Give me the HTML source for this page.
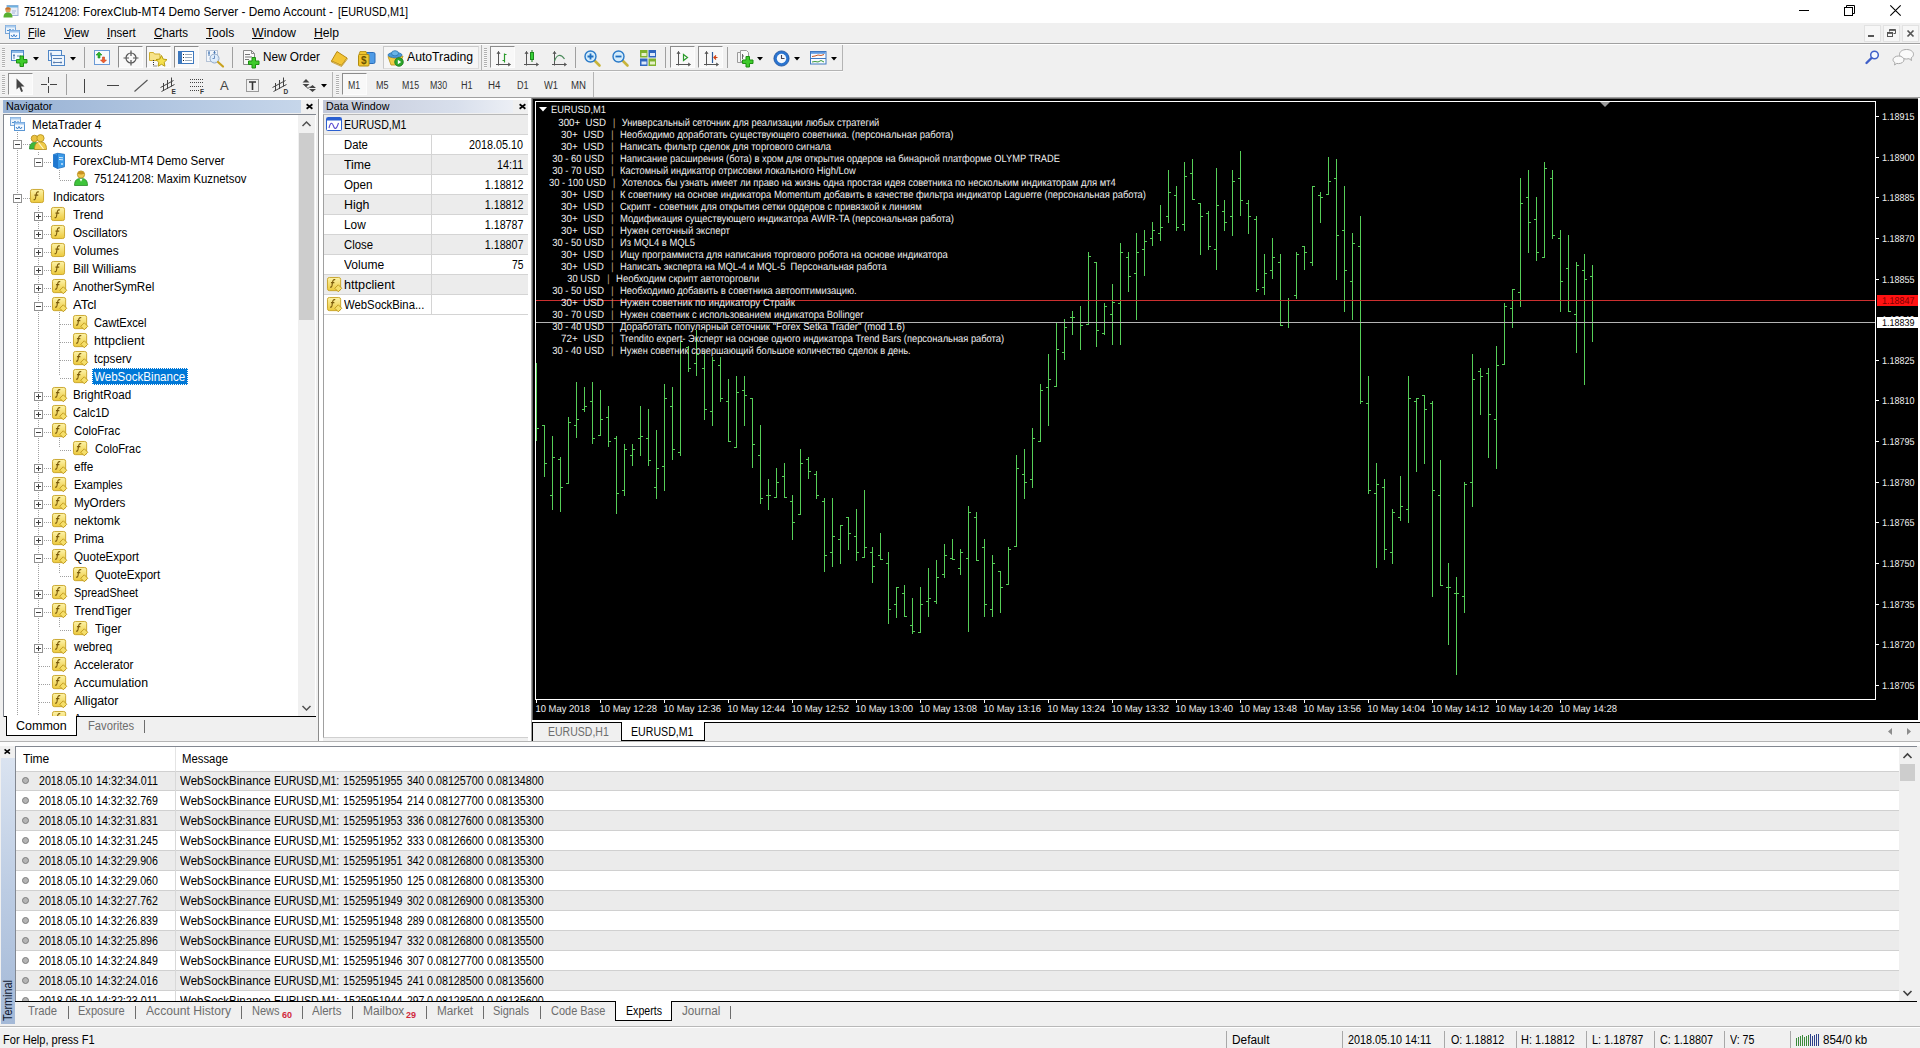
<!DOCTYPE html>
<html lang="en">
<head>
<meta charset="utf-8">
<title>751241208: ForexClub-MT4 Demo Server - Demo Account - [EURUSD,M1]</title>
<style>
*{box-sizing:border-box;margin:0;padding:0}
html,body{width:1920px;height:1048px;overflow:hidden;background:#f0f0f0}
body{font-family:"Liberation Sans",sans-serif;font-size:12px;color:#000;position:relative}
.abs{position:absolute}
.t{position:absolute;white-space:pre;line-height:14px;transform-origin:0 0}
svg{position:absolute;overflow:visible}
#titlebar{position:absolute;left:0;top:0;width:1920px;height:23px;background:#fff}
#menubar{position:absolute;left:0;top:23px;width:1920px;height:20px;background:#f0f0f0}
.mi{position:absolute;top:3px;font-size:12px;line-height:14px;white-space:pre;transform-origin:0 0}
.mi u{text-decoration:underline;text-underline-offset:1px}
.hl{position:absolute;height:1px}
.vl{position:absolute;width:1px}
.grip{position:absolute;width:3px;background:repeating-linear-gradient(to bottom,#b0b0b0 0,#b0b0b0 1px,#f8f8f8 1px,#f8f8f8 2px)}
.tbsep{position:absolute;width:1px;background:#a0a0a0}
.pressed{position:absolute;background:#f8f8f8;border:1px solid;border-color:#8c8c8c #fcfcfc #fcfcfc #8c8c8c}
.tf{position:absolute;font-size:10px;line-height:12px;color:#333;white-space:pre;transform-origin:0 0}
.phead{position:absolute;height:13px}
.pht{position:absolute;font-size:11px;line-height:13px;white-space:pre;transform-origin:0 0}
.tree .t{font-size:12px;line-height:18px;height:18px}
.dotsh{position:absolute;height:1px;background:repeating-linear-gradient(to right,#a0a0a0 0,#a0a0a0 1px,transparent 1px,transparent 2px)}
.dotsv{position:absolute;width:1px;background:repeating-linear-gradient(to bottom,#a0a0a0 0,#a0a0a0 1px,transparent 1px,transparent 2px)}
.pm{position:absolute;width:9px;height:9px;border:1px solid #919191;background:#fff}
.pm:before{content:"";position:absolute;left:1px;top:3px;width:5px;height:1px;background:#404040}
.pm.plus:after{content:"";position:absolute;left:3px;top:1px;width:1px;height:5px;background:#404040}
.tab{position:absolute;font-size:12px;line-height:14px;white-space:pre;color:#6d6d6d;transform-origin:0 0}
.dw{position:absolute;font-size:12px;line-height:14px;white-space:pre;transform-origin:0 0}
.dwr{transform-origin:100% 0}
.ct{font-family:"Liberation Sans",sans-serif;font-size:10.5px;fill:#f0f0f0;white-space:pre}
.ax{font-size:10px}
.lr{position:absolute;left:16px;width:1883px;height:20px;border-bottom:1px solid #d4d4d4}
.lr .t{top:3px;font-size:12px}
.sb{position:absolute;top:1033px;font-size:12px;line-height:14px;white-space:pre;transform-origin:0 0}
</style>
</head>
<body>
<!-- TITLE BAR -->
<div id="titlebar">
  <svg style="left:3px;top:5px" width="16" height="13" viewBox="0 0 16 13">
    <rect x="4" y="0.5" width="11" height="10" fill="#e8eef8" stroke="#9db3d6"/>
    <rect x="4" y="0.5" width="11" height="2" fill="#6fb1e0"/>
    <path d="M9 6h4M9 8h3" stroke="#a9b7d9" stroke-width="1"/>
    <circle cx="5" cy="5" r="2.6" fill="#e0a060"/>
    <path d="M2.2 4.6a2.8 2.4 0 0 1 5.6 0z" fill="#c8702a"/>
    <path d="M0.5 12.5c0-4 2-5 4.5-5s4.5 1 4.500 5z" fill="#58b030"/>
  </svg>
  <div class="t" style="left:23.75px;top:5px;font-size:12px;line-height:14px;transform:scaleX(0.8793)">751241208:</div>
  <div class="t" style="left:83.25px;top:5px;font-size:12px;line-height:14px;transform:scaleX(0.9866)">ForexClub-MT4 Demo Server - Demo Account -</div>
  <div class="t" style="left:337.5px;top:5px;font-size:12px;line-height:14px;transform:scaleX(0.9050)">[EURUSD,M1]</div>
  <!-- window controls -->
  <div class="abs" style="left:1799px;top:10px;width:10px;height:1px;background:#000"></div>
  <svg style="left:1844px;top:5px" width="11" height="11" viewBox="0 0 11 11" fill="none" stroke="#000" stroke-width="1">
    <rect x="0.500" y="2.500" width="8" height="8"/><path d="M2.500 2.500v-2h8v8h-2"/>
  </svg>
  <svg style="left:1890px;top:5px" width="11" height="11" viewBox="0 0 11 11" fill="none" stroke="#000" stroke-width="1.100">
    <path d="M0.300 0.300l10.400 10.400M10.700 0.300l-10.400 10.400"/>
  </svg>
</div>

<!-- MENU BAR -->
<div id="menubar">
  <svg style="left:5px;top:2px" width="15" height="14" viewBox="0 0 15 14">
    <rect x="0.500" y="0.500" width="10" height="8" fill="#eaf2fb" stroke="#7aa7d8"/>
    <rect x="0.500" y="0.500" width="10" height="2" fill="#a9cbee"/>
    <path d="M2 5.500h2l1-1.500 1 2 1-1h2" stroke="#4d8fd0" fill="none" stroke-width="1"/>
    <rect x="4.500" y="5.500" width="10" height="8" fill="#f4f9ff" stroke="#5b97d4"/>
    <rect x="4.500" y="5.500" width="10" height="2" fill="#9cc4ee"/>
    <path d="M6 10l1.500 2 1.500-2.500 1.500 2.500 1.500-2" stroke="#3b7fc8" fill="none" stroke-width="1"/>
  </svg>
  <div class="mi" id="m1" style="left:28.3px;transform:scaleX(0.8988)"><u>F</u>ile</div>
  <div class="mi" id="m2" style="left:64px;transform:scaleX(0.9685)"><u>V</u>iew</div>
  <div class="mi" id="m3" style="left:107.3px;transform:scaleX(0.9557)"><u>I</u>nsert</div>
  <div class="mi" id="m4" style="left:154.3px;transform:scaleX(0.9616)"><u>C</u>harts</div>
  <div class="mi" id="m5" style="left:206px;transform:scaleX(1.0102)"><u>T</u>ools</div>
  <div class="mi" id="m6" style="left:252px;transform:scaleX(1.0307)"><u>W</u>indow</div>
  <div class="mi" id="m7" style="left:314px;transform:scaleX(1.0127)"><u>H</u>elp</div>
  <!-- MDI child controls -->
  <div class="abs" style="left:1864px;top:2px;width:17px;height:17px;background:#f7f7f7;border:1px solid #e2e2e2"></div>
  <div class="abs" style="left:1883px;top:2px;width:17px;height:17px;background:#f7f7f7;border:1px solid #e2e2e2"></div>
  <div class="abs" style="left:1902px;top:2px;width:17px;height:17px;background:#f7f7f7;border:1px solid #e2e2e2"></div>
  <div class="abs" style="left:1868px;top:12px;width:6px;height:2px;background:#555"></div>
  <svg style="left:1887px;top:6px" width="9" height="8" viewBox="0 0 9 8" fill="none" stroke="#555">
    <path d="M2.500 2.500v-2h6v4h-2" /><path d="M2.500 1.200h6" stroke-width="1.400"/>
    <rect x="0.500" y="3.500" width="5" height="4"/><path d="M0.500 4.200h5" stroke-width="1.400"/>
  </svg>
  <svg style="left:1907px;top:7px" width="7" height="7" viewBox="0 0 7 7" fill="none" stroke="#555" stroke-width="1.700">
    <path d="M0.500 0.500l6 6M6.500 0.500l-6 6"/>
  </svg>
</div>
<div class="hl" style="left:0;top:43px;width:1920px;background:#a0a0a0"></div>
<div class="hl" style="left:0;top:44px;width:1920px;background:#ffffff"></div>
<!-- TOOLBAR 1 -->
<div class="hl" style="left:0;top:70px;width:843px;background:#b4b4b4"></div>
<div class="hl" style="left:0;top:71px;width:843px;background:#fafafa"></div>
<div class="vl" style="left:842px;top:45px;height:26px;background:#b4b4b4"></div>
<div class="grip" style="left:2px;top:48px;height:20px"></div>
<!-- new chart -->
<svg style="left:11px;top:50px" width="18" height="18" viewBox="0 0 18 18">
  <rect x="0.500" y="0.500" width="12" height="10" fill="#f4f9ff" stroke="#4f86c6"/>
  <rect x="1" y="1" width="11" height="2" fill="#8fbbe8"/>
  <path d="M3 4v5M2 5.500h2M6 6h4" stroke="#5a7fb0" fill="none"/>
  <path d="M9 6h3.500v3.500H16v3.500h-3.500v3.500H9v-3.500H5.500V9.500H9z" fill="#3ecb2a" stroke="#1d8f12" stroke-width="1"/>
</svg>
<svg style="left:33px;top:57px" width="6" height="4"><path d="M0 0h6l-3 3.500z" fill="#000"/></svg>
<!-- profiles -->
<svg style="left:48px;top:50px" width="18" height="18" viewBox="0 0 18 18">
  <rect x="0.500" y="0.500" width="13" height="10" fill="#eef5fd" stroke="#4f86c6"/>
  <path d="M3 2.500v4M2 4h2M4 6h7M10 5v2" stroke="#5a7fb0" fill="none"/>
  <rect x="3.500" y="5.500" width="13" height="10" fill="#eef5fd" stroke="#4f86c6"/>
  <path d="M5 8.500h9M5 12.500h9M6 11.500v2M13 11.500v2" stroke="#5a7fb0" fill="none"/>
</svg>
<svg style="left:70px;top:57px" width="6" height="4"><path d="M0 0h6l-3 3.500z" fill="#000"/></svg>
<div class="tbsep" style="left:84px;top:47px;height:21px"></div>
<!-- market watch -->
<svg style="left:94px;top:50px" width="17" height="17" viewBox="0 0 17 17">
  <rect x="0.500" y="0.500" width="15" height="14" fill="#f6f9fd" stroke="#6a9ad6"/>
  <path d="M5 2l3 3h-2v3h-2v-3h-2z" fill="#2eb82e" stroke="#1c8c1c" stroke-width="0.600"/>
  <path d="M9.500 13l-3-3h2v-3h2v3h2z" fill="#f06030" stroke="#c8401a" stroke-width="0.600"/>
</svg>
<!-- crosshair (pressed) -->
<div class="pressed" style="left:118px;top:46px;width:25px;height:22px"></div>
<svg style="left:123px;top:50px" width="16" height="16" viewBox="0 0 16 16" fill="none" stroke="#555" stroke-width="1.200">
  <circle cx="8" cy="8" r="5"/><path d="M8 0.500v5.500M8 10v5.500M0.500 8h5.500M10 8h5.500"/>
</svg>
<!-- navigator folder star (pressed) -->
<div class="pressed" style="left:146px;top:46px;width:25px;height:22px"></div>
<svg style="left:149px;top:50px" width="19" height="18" viewBox="0 0 19 18">
  <path d="M0.500 2.500h4l1 1.500h5.500v6.500H0.500z" fill="#f7e38a" stroke="#cfae2e"/>
  <path d="M4.500 10v6h3" stroke="#333" stroke-dasharray="1 1" fill="none"/>
  <path d="M12.500 5.500l1.700 3.600 3.800 0.500-2.800 2.700 0.700 3.900-3.400-1.900-3.400 1.900 0.700-3.900-2.800-2.700 3.800-0.500z" fill="#f5e14e" stroke="#b89c12" stroke-width="1"/>
</svg>
<!-- terminal/list (pressed) -->
<div class="pressed" style="left:174px;top:46px;width:25px;height:22px"></div>
<svg style="left:178px;top:51px" width="17" height="14" viewBox="0 0 17 14">
  <rect x="0.500" y="0.500" width="15" height="12" fill="#fff" stroke="#3d78be"/>
  <rect x="1" y="1" width="3" height="11" fill="#3d78be"/>
  <path d="M5 3.500h1M5 6.500h1M5 9.500h1" stroke="#222"/><path d="M7 3.500h7M7 6.500h7M7 9.500h7" stroke="#9ab"/>
</svg>
<!-- strategy tester magnifier -->
<svg style="left:206px;top:50px" width="19" height="18" viewBox="0 0 19 18">
  <rect x="0.500" y="0.500" width="11" height="11" fill="#f2f6fb" stroke="#b5c3d6"/>
  <path d="M3 1v5M2 3h2M8.500 1v4M7.500 2.500h2" stroke="#4a7ab5" fill="none"/>
  <circle cx="8.500" cy="8.500" r="4.500" fill="#dcebfa" fill-opacity="0.850" stroke="#8fa9c9"/>
  <path d="M8.500 5.500v3h-2" stroke="#6a8fc0" fill="none"/>
  <path d="M12 12l5 4.500" stroke="#c9a21e" stroke-width="2.200" stroke-linecap="round"/>
</svg>
<div class="tbsep" style="left:232px;top:47px;height:21px"></div>
<!-- new order -->
<svg style="left:243px;top:50px" width="17" height="19" viewBox="0 0 17 19">
  <path d="M0.500 0.500h8l3 3v11h-11z" fill="#fafafa" stroke="#8a8a8a"/>
  <path d="M8.500 0.500v3h3" fill="none" stroke="#8a8a8a"/>
  <path d="M2 4.500h5M2 7h7M2 9.500h4" stroke="#777"/>
  <path d="M9 7.500h3.500V11H16v3.500h-3.500V18H9v-3.500H5.500V11H9z" fill="#3ecb2a" stroke="#1d8f12"/>
</svg>
<div class="t" id="neword" style="left:262.5px;top:50px;font-size:12px;transform:scaleX(0.9825)">New Order</div>
<!-- book -->
<svg style="left:331px;top:51px" width="17" height="16" viewBox="0 0 17 16">
  <path d="M6 0.500l10 6.500-5.500 7.500-10-4.500z" fill="#f2c436" stroke="#b98a10"/>
  <path d="M0.500 10l10 4.500 5.500-7.500v1.500l-5.500 7-10-4.500z" fill="#fff3c0" stroke="#b98a10" stroke-width="0.700"/>
</svg>
<!-- dollar -->
<svg style="left:358px;top:50px" width="18" height="17" viewBox="0 0 18 17">
  <rect x="6.500" y="2.500" width="10.500" height="11" rx="1.500" fill="#4f9be6" stroke="#2a6cb8"/>
  <rect x="0.500" y="4.500" width="10.500" height="11.500" rx="1" fill="#f0c52e" stroke="#b18c10"/>
  <path d="M2 1.500h6l1 3h-8z" fill="#f0c52e" stroke="#b18c10" stroke-width="0.800"/>
  <text x="5.800" y="14" font-size="10" font-weight="bold" text-anchor="middle" fill="#6a5200" font-family="Liberation Sans, sans-serif">$</text>
</svg>
<!-- autotrading -->
<div class="abs" style="left:383px;top:46px;width:96px;height:23px;background:#f6f6f6;border:1px solid #dcdcdc;border-top-color:#c8c8c8;border-left-color:#c8c8c8"></div>
<svg style="left:387px;top:50px" width="17" height="17" viewBox="0 0 17 17">
  <path d="M1 6.500l7 2 8-2.500-3 9h-9z" fill="#f0cb45" stroke="#b8921a" stroke-width="0.800"/>
  <ellipse cx="8" cy="5" rx="7" ry="2.600" fill="#4a9ad8" stroke="#2a72b0" stroke-width="0.800"/>
  <ellipse cx="8" cy="3.300" rx="3.500" ry="2.600" fill="#6ab4e8" stroke="#2a72b0" stroke-width="0.800"/>
  <circle cx="12" cy="12" r="4.300" fill="#2ba52b" stroke="#1a7a1a" stroke-width="0.800"/>
  <path d="M10.800 9.800l3.400 2.200-3.400 2.200z" fill="#fff"/>
</svg>
<div class="t" id="autot" style="left:407.3px;top:50px;font-size:12px;transform:scaleX(1.0164)">AutoTrading</div>
<div class="tbsep" style="left:481px;top:45px;height:25px;background:#b4b4b4"></div>
<div class="grip" style="left:484px;top:48px;height:20px"></div>
<!-- bar chart (pressed) -->
<div class="pressed" style="left:490px;top:46px;width:25px;height:22px"></div>
<svg style="left:496px;top:51px" width="15" height="16" viewBox="0 0 15 16" fill="none">
  <path d="M2.500 0.500v14M0 13.500h14M1 3l1.500-2.500 1.500 2.500M12 12l2.500 1.500-2.500 1.500" stroke="#555"/>
  <path d="M8.500 2.500v9M8.500 3.500h2M6.500 9.500h2" stroke="#2a9a2a" stroke-width="1.200"/>
</svg>
<!-- candles -->
<svg style="left:524px;top:50px" width="15" height="17" viewBox="0 0 15 17" fill="none">
  <path d="M2.500 1.500v14M0 14.500h14M1 4l1.500-2.500 1.500 2.500M12 13l2.500 1.500-2.500 1.500" stroke="#555"/>
  <path d="M8 0v12" stroke="#1c7a1c"/><rect x="6.500" y="2.500" width="3" height="7" fill="#36d036" stroke="#1c8a1c"/>
</svg>
<!-- line chart -->
<svg style="left:552px;top:51px" width="15" height="16" viewBox="0 0 15 16" fill="none">
  <path d="M2.500 0.500v14M0 13.500h14M1 3l1.500-2.500 1.500 2.500M12 12l2.500 1.500-2.500 1.500" stroke="#555"/>
  <path d="M2.500 10c2-6 6-8 10-2" stroke="#4a8a5a" stroke-width="1.200"/>
</svg>
<div class="tbsep" style="left:575px;top:47px;height:21px"></div>
<!-- zoom in -->
<svg style="left:584px;top:50px" width="17" height="17" viewBox="0 0 17 17">
  <path d="M10 10l5.500 5.500" stroke="#c8b43a" stroke-width="2.600" stroke-linecap="round"/>
  <circle cx="6.500" cy="6.500" r="5.500" fill="#d4ecfb" stroke="#2a7ac8" stroke-width="1.400"/>
  <path d="M3.500 6.500h6M6.500 3.500v6" stroke="#1f6fc0" stroke-width="1.800"/>
</svg>
<!-- zoom out -->
<svg style="left:612px;top:50px" width="17" height="17" viewBox="0 0 17 17">
  <path d="M10 10l5.500 5.500" stroke="#c8b43a" stroke-width="2.600" stroke-linecap="round"/>
  <circle cx="6.500" cy="6.500" r="5.500" fill="#d4ecfb" stroke="#2a7ac8" stroke-width="1.400"/>
  <path d="M3.500 6.500h6" stroke="#1f6fc0" stroke-width="1.800"/>
</svg>
<!-- tile -->
<svg style="left:640px;top:50px" width="16" height="16" viewBox="0 0 16 16">
  <rect x="0" y="0" width="7.500" height="7.500" fill="#7fb22e"/><rect x="8.500" y="0" width="7.500" height="7.500" fill="#2f66c0"/>
  <rect x="0" y="8.500" width="7.500" height="7.500" fill="#2f66c0"/><rect x="8.500" y="8.500" width="7.500" height="7.500" fill="#7fb22e"/>
  <rect x="1.500" y="3" width="5" height="3" fill="#e6f0c8"/><rect x="10" y="3" width="5" height="3" fill="#dce8fa"/>
  <rect x="1.500" y="11.500" width="5" height="3" fill="#dce8fa"/><rect x="10" y="11.500" width="5" height="3" fill="#e6f0c8"/>
</svg>
<div class="tbsep" style="left:665px;top:47px;height:21px"></div>
<!-- autoscroll (pressed) -->
<div class="pressed" style="left:670px;top:46px;width:25px;height:22px"></div>
<svg style="left:676px;top:51px" width="15" height="16" viewBox="0 0 15 16" fill="none">
  <path d="M2.500 0.500v14M0 13.500h14M1 3l1.500-2.500 1.500 2.500M12 12l2.500 1.500-2.500 1.500" stroke="#555"/>
  <path d="M7.500 3.500l4 3-4 3z" stroke="#2a9a2a" stroke-width="1.200"/>
</svg>
<!-- chart shift (pressed) -->
<div class="pressed" style="left:698px;top:46px;width:25px;height:22px"></div>
<svg style="left:704px;top:51px" width="15" height="16" viewBox="0 0 15 16" fill="none">
  <path d="M2.500 0.500v14M0 13.500h14M1 3l1.500-2.500 1.500 2.500M12 12l2.500 1.500-2.500 1.500" stroke="#555"/>
  <path d="M8.500 1v11" stroke="#2a5a9a" stroke-width="1.200"/><path d="M13.500 6.500h-4M12 4.500l-2 2 2 2" stroke="#d04010" stroke-width="1.200"/>
</svg>
<div class="tbsep" style="left:727px;top:47px;height:21px"></div>
<!-- indicators -->
<svg style="left:737px;top:50px" width="17" height="18" viewBox="0 0 17 18">
  <path d="M0.500 2.500h6l2 2v8h-8z" fill="#f4f4f4" stroke="#9a9a9a"/>
  <path d="M3.500 0.500h6l2 2v9h-8z" fill="#fafafa" stroke="#9a9a9a"/>
  <path d="M5.500 4v5M5.500 6h1.500" stroke="#666" fill="none"/>
  <path d="M9 6.500h3.500V10H16v3.500h-3.500V17H9v-3.500H5.500V10H9z" fill="#3ecb2a" stroke="#1d8f12"/>
</svg>
<svg style="left:757px;top:57px" width="6" height="4"><path d="M0 0h6l-3 3.500z" fill="#000"/></svg>
<!-- clock -->
<svg style="left:773px;top:50px" width="17" height="17" viewBox="0 0 17 17">
  <circle cx="8.500" cy="8.500" r="7.600" fill="#2a74d0" stroke="#1a4f9a" stroke-width="0.800"/>
  <circle cx="8.500" cy="8.500" r="4.700" fill="#f4f8fc"/>
  <path d="M8.500 5v3.500h3" stroke="#445" fill="none" stroke-width="1.100"/>
</svg>
<svg style="left:794px;top:57px" width="6" height="4"><path d="M0 0h6l-3 3.500z" fill="#000"/></svg>
<!-- templates -->
<svg style="left:810px;top:51px" width="17" height="14" viewBox="0 0 17 14">
  <rect x="0.500" y="0.500" width="15.500" height="12.500" fill="#f8fbff" stroke="#3f78c0"/>
  <rect x="1" y="1" width="14.500" height="1.800" fill="#5f9ae0"/>
  <path d="M0.500 7.500h15.500" stroke="#3f78c0"/>
  <path d="M2 5.500l3-0.500 3 -1 3 0.500 3-1" stroke="#c85a28" fill="none"/>
  <path d="M2 11l3-0.500 3 0.500 3-1.500 3 1.500" stroke="#3a9a3a" fill="none"/>
</svg>
<svg style="left:831px;top:57px" width="6" height="4"><path d="M0 0h6l-3 3.500z" fill="#000"/></svg>
<!-- right: search + chat -->
<svg style="left:1865px;top:50px" width="15" height="15" viewBox="0 0 15 15" fill="none">
  <circle cx="9.500" cy="5" r="3.800" stroke="#3f5fc8" stroke-width="1.500" fill="#f4f8ff"/>
  <path d="M6.500 8l-5 5" stroke="#3f5fc8" stroke-width="2.400" stroke-linecap="round"/>
</svg>
<svg style="left:1892px;top:49px" width="23" height="17" viewBox="0 0 23 17" fill="#fafafa" stroke="#a8a8a8">
  <path d="M14.500 0.500c4 0 7 2 7 4.800 0 1.500-1 2.800-2.400 3.700l0.400 2.500-2.500-1.800c-0.800 0.200-1.600 0.300-2.500 0.300-4 0-7-2-7-4.700s3-4.800 7-4.800z"/>
  <path d="M6.500 7c3 0 5.500 1.700 5.500 3.800s-2.500 3.800-5.500 3.800c-0.600 0-1.200-0.100-1.700-0.200l-2.300 1.600 0.500-2.300c-1.200-0.700-2-1.800-2-2.900 0-2.100 2.500-3.800 5.500-3.800z"/>
</svg>

<!-- TOOLBAR 2 -->
<div class="hl" style="left:0;top:97px;width:1920px;background:#a0a0a0"></div>
<div class="vl" style="left:593px;top:72px;height:25px;background:#b4b4b4"></div>
<div class="grip" style="left:2px;top:75px;height:20px"></div>
<div class="pressed" style="left:8px;top:73px;width:25px;height:22px"></div>
<svg style="left:16px;top:78px" width="9" height="15" viewBox="0 0 9 15"><path d="M0.500 0.500v11l2.700-2.500 2 5 1.800-0.800-2-4.700h3.500z" fill="#444"/></svg>
<svg style="left:41px;top:77px" width="16" height="16" viewBox="0 0 16 16" stroke="#444" fill="none"><path d="M7.500 0v6M7.500 9v7M0 7.500h6M9 7.500h7"/></svg>
<div class="tbsep" style="left:66px;top:74px;height:21px"></div>
<div class="vl" style="left:84px;top:79px;height:14px;background:#444"></div>
<div class="hl" style="left:107px;top:85px;width:12px;background:#444"></div>
<svg style="left:134px;top:79px" width="14" height="14" viewBox="0 0 14 14"><path d="M0.500 12.500l13-11.500" stroke="#555" stroke-width="1.100"/></svg>
<svg style="left:160px;top:77px" width="17" height="17" viewBox="0 0 17 17" fill="none" stroke="#444">
  <path d="M0.500 10.500l13-7M1.500 14.500l13-7M3.500 6v8M7.500 3v9M11.500 0.500v9" stroke-width="1"/>
  <text x="11.500" y="16.500" font-size="6.500" font-weight="bold" fill="#333" stroke="none" font-family="Liberation Sans, sans-serif">E</text>
</svg>
<svg style="left:190px;top:79px" width="16" height="16" viewBox="0 0 16 16" fill="none" stroke="#444">
  <path d="M0 0.500h13M0 3.500h13M0 7.500h13M0 11.500h9" stroke-dasharray="1 1"/>
  <text x="10" y="15" font-size="6.500" font-weight="bold" fill="#333" stroke="none" font-family="Liberation Sans, sans-serif">F</text>
</svg>
<div class="t" style="left:220px;top:78px;font-size:13px;line-height:15px;color:#444">A</div>
<svg style="left:246px;top:78px" width="14" height="15" viewBox="0 0 14 15" fill="none">
  <rect x="0.500" y="1.500" width="12" height="12" stroke="#444" stroke-dasharray="1 1"/>
  <path d="M3 4h7M6.500 4v8" stroke="#333" stroke-width="1.600"/>
</svg>
<svg style="left:272px;top:77px" width="17" height="17" viewBox="0 0 17 17" fill="none" stroke="#444">
  <path d="M0.500 10.500l13-7M1.500 14.500l13-7M3.500 6v8M7.500 3v9M11.500 0.500v9" stroke-width="1"/>
  <text x="11.500" y="16.500" font-size="6.500" font-weight="bold" fill="#333" stroke="none" font-family="Liberation Sans, sans-serif">D</text>
</svg>
<svg style="left:302px;top:79px" width="15" height="13" viewBox="0 0 15 13" fill="#444">
  <path d="M4 0l3.500 3.500h-7zM0.500 5h7l-3.500 3z"/><path d="M3 6.500l3 3 2-2" stroke="#444" fill="none"/>
  <path d="M10.500 6l3.500 3h-7zM7 10h7l-3.500 3z"/>
</svg>
<svg style="left:321px;top:84px" width="6" height="4"><path d="M0 0h6l-3 3.500z" fill="#000"/></svg>
<div class="vl" style="left:332px;top:72px;height:25px;background:#b4b4b4"></div>
<div class="grip" style="left:336px;top:75px;height:20px"></div>
<div class="pressed" style="left:342px;top:73px;width:25px;height:22px"></div>
<div class="tf" style="left:347.5px;top:80px;transform:scaleX(0.8773)">M1</div>
<div class="tf" style="left:375.6px;top:80px;transform:scaleX(0.8989)">M5</div>
<div class="tf" style="left:401.9px;top:80px;transform:scaleX(0.8790)">M15</div>
<div class="tf" style="left:429.75px;top:80px;transform:scaleX(0.8790)">M30</div>
<div class="tf" style="left:460.6px;top:80px;transform:scaleX(0.9065)">H1</div>
<div class="tf" style="left:487.5px;top:80px;transform:scaleX(0.9768)">H4</div>
<div class="tf" style="left:516.5px;top:80px;transform:scaleX(0.9065)">D1</div>
<div class="tf" style="left:544.1px;top:80px;transform:scaleX(0.9333)">W1</div>
<div class="tf" style="left:570.6px;top:80px;transform:scaleX(0.9639)">MN</div>
<svg width="0" height="0" style="left:-10px;top:-10px"><defs>
<linearGradient id="gF" x1="0" y1="0" x2="0" y2="1"><stop offset="0" stop-color="#fdf3a8"/><stop offset="1" stop-color="#ecc93c"/></linearGradient>
<g id="icoF"><rect x="0.500" y="0.500" width="14" height="14" rx="2" fill="url(#gF)" stroke="#c9a42a"/>
<path d="M9.500 3.300c-2-0.800-2.600 0.600-2.900 2.600l-0.700 4c-0.300 1.500-1 1.800-2 1.400M4.800 6.600h4" fill="none" stroke="#7a5a0a" stroke-width="1.200"/></g>
<g id="icoFD"><rect x="0.500" y="0.500" width="14" height="14" rx="2" fill="url(#gF)" stroke="#c9a42a"/>
<path d="M8.800 3c-2-0.800-2.600 0.600-2.900 2.600l-0.600 3.600c-0.300 1.500-1 1.800-2 1.400M4.200 6h3.600" fill="none" stroke="#7a5a0a" stroke-width="1.200"/>
<path d="M12 8.300l3.700 3.700-3.700 3.700-3.700-3.700z" fill="#f6df6a" stroke="#b8921a" stroke-width="0.900"/></g>
</defs></svg>
<!-- NAVIGATOR -->
<div class="abs" style="left:0;top:98px;width:531px;height:2px;background:#fff"></div>
<div class="phead" style="left:3px;top:100px;width:298px;background:linear-gradient(to right,#98b2d4,#b4c8e2 60%,#c6d6ea)"></div>
<div class="pht" style="left:5.6px;top:100px;transform:scaleX(0.9856)">Navigator</div>
<div class="abs" style="left:301px;top:100px;width:15px;height:13px;background:#f0f0f0"></div>
<svg style="left:305.5px;top:104px" width="7" height="5" viewBox="0 0 7 5"><path d="M0.600 0.300l5.800 4.400M6.400 0.300l-5.800 4.400" stroke="#000" stroke-width="1.700"/></svg>
<div class="abs tree" style="left:3px;top:114px;width:313px;height:603px;background:#fff;border:1px solid #828790;border-bottom:none;border-right:none;overflow:hidden">
<div class="dotsv" style="left:13px;top:17px;height:588px"></div>
<div class="dotsv" style="left:34px;top:37px;height:4px"></div>
<div class="dotsv" style="left:55px;top:55px;height:9px"></div>
<div class="dotsv" style="left:34px;top:91px;height:514px"></div>
<svg style="left:6px;top:2px" width="15" height="14" viewBox="0 0 15 14">
    <rect x="0.500" y="0.500" width="10" height="8" fill="#eaf2fb" stroke="#7aa7d8"/><rect x="0.500" y="0.500" width="10" height="2" fill="#a9cbee"/>
    <path d="M2 5.500h2l1-1.500 1 2 1-1h2" stroke="#4d8fd0" fill="none"/>
    <rect x="4.500" y="5.500" width="10" height="8" fill="#f4f9ff" stroke="#5b97d4"/><rect x="4.500" y="5.500" width="10" height="2" fill="#9cc4ee"/>
    <path d="M6 10l1.500 2 1.500-2.500 1.500 2.500 1.500-2" stroke="#3b7fc8" fill="none"/></svg>
<div class="t nt" style="left:27.8px;top:1px;transform:scaleX(0.9680)">MetaTrader 4</div>
<div class="dotsh" style="left:19px;top:29px;width:7px"></div>
<div class="pm" style="left:9px;top:25px"></div>
<svg style="left:25px;top:19px" width="18" height="16" viewBox="0 0 18 16">
    <circle cx="5.500" cy="4.500" r="3.300" fill="#eac040" stroke="#b08a18" stroke-width="0.800"/>
    <path d="M0.500 15c0-5 2-6.500 5-6.500s5 1.500 5 6.500z" fill="#3eb83a" stroke="#2a8a28" stroke-width="0.800"/>
    <circle cx="11.500" cy="4.200" r="3.600" fill="#f0cc4a" stroke="#b08a18" stroke-width="0.800"/>
    <path d="M5.500 15.500c0-6 2.500-7.500 6-7.500s6 1.500 6 7.500z" fill="#f0cc4a" stroke="#b08a18" stroke-width="0.800"/>
    <path d="M9.500 8.500l5 6.500" stroke="#fff8d0" stroke-width="1.200"/></svg>
<div class="t nt" style="left:48.5px;top:19px;transform:scaleX(1.0028)">Accounts</div>
<div class="dotsh" style="left:40px;top:47px;width:7px"></div>
<div class="pm" style="left:30px;top:43px"></div>
<svg style="left:49px;top:38px" width="12" height="16" viewBox="0 0 12 16">
    <path d="M0.500 1.500l4-1.200 7 1v12.500l-7 1.700-4-2z" fill="#3a9ae8" stroke="#1f6fc0" stroke-width="0.800"/>
    <path d="M4.500 0.500v15" stroke="#1f6fc0" stroke-width="0.800"/>
    <path d="M0.500 1.500l4 1v13l-4-2z" fill="#1f78d0"/>
    <path d="M6 4.500l4 0.300M6 6.500l4 0.300" stroke="#d8ecff" stroke-width="1"/><circle cx="9" cy="11" r="0.900" fill="#d8ecff"/></svg>
<div class="t nt" style="left:69.3px;top:37px;transform:scaleX(0.9639)">ForexClub-MT4 Demo Server</div>
<div class="dotsh" style="left:56px;top:65px;width:12px"></div>
<svg style="left:70px;top:55px" width="14" height="16" viewBox="0 0 14 16">
    <circle cx="7" cy="4.500" r="3.600" fill="#f0c850" stroke="#b08a18" stroke-width="0.800"/>
    <path d="M3.600 3.800a3.500 3.200 0 0 1 6.800 0c-2 0.800-4.800 0.800-6.800 0z" fill="#c89020"/>
    <path d="M0.500 15.500c0-5.500 2.500-7 6.500-7s6.500 1.500 6.500 7z" fill="#3ec43a" stroke="#2a8a28" stroke-width="0.800"/>
    <path d="M5.500 8.800l1.500 3 1.500-3z" fill="#fff"/></svg>
<div class="t nt" style="left:90.3px;top:55px;transform:scaleX(0.9440)">751241208: Maxim Kuznetsov</div>
<div class="dotsh" style="left:19px;top:83px;width:7px"></div>
<div class="pm" style="left:9px;top:79px"></div>
<svg style="left:26px;top:74px" width="14" height="14" viewBox="0 0 15 15"><rect x="0.500" y="0.500" width="14" height="14" rx="2" fill="url(#gF)" stroke="#c9a42a"/><path d="M9.500 3.300c-2-0.800-2.600 0.600-2.900 2.600l-0.700 4c-0.300 1.500-1 1.800-2 1.400M4.800 6.600h4" fill="none" stroke="#7a5a0a" stroke-width="1.200"/></svg>
<div class="t nt" style="left:48.5px;top:73px;transform:scaleX(0.9879)">Indicators</div>
<div class="dotsh" style="left:40px;top:101px;width:7px"></div>
<div class="pm plus" style="left:30px;top:97px"></div>
<svg style="left:47px;top:92px" width="14" height="14" viewBox="0 0 15 15"><rect x="0.500" y="0.500" width="14" height="14" rx="2" fill="url(#gF)" stroke="#c9a42a"/><path d="M9.500 3.300c-2-0.800-2.600 0.600-2.900 2.600l-0.700 4c-0.300 1.500-1 1.800-2 1.400M4.800 6.600h4" fill="none" stroke="#7a5a0a" stroke-width="1.200"/></svg>
<div class="t nt" style="left:69.3px;top:91px;transform:scaleX(0.9804)">Trend</div>
<div class="dotsh" style="left:40px;top:119px;width:7px"></div>
<div class="pm plus" style="left:30px;top:115px"></div>
<svg style="left:47px;top:110px" width="14" height="14" viewBox="0 0 15 15"><rect x="0.500" y="0.500" width="14" height="14" rx="2" fill="url(#gF)" stroke="#c9a42a"/><path d="M9.500 3.300c-2-0.800-2.600 0.600-2.900 2.600l-0.700 4c-0.300 1.500-1 1.800-2 1.400M4.800 6.600h4" fill="none" stroke="#7a5a0a" stroke-width="1.200"/></svg>
<div class="t nt" style="left:69.3px;top:109px;transform:scaleX(0.9712)">Oscillators</div>
<div class="dotsh" style="left:40px;top:137px;width:7px"></div>
<div class="pm plus" style="left:30px;top:133px"></div>
<svg style="left:47px;top:128px" width="14" height="14" viewBox="0 0 15 15"><rect x="0.500" y="0.500" width="14" height="14" rx="2" fill="url(#gF)" stroke="#c9a42a"/><path d="M9.500 3.300c-2-0.800-2.600 0.600-2.900 2.600l-0.700 4c-0.300 1.500-1 1.800-2 1.400M4.800 6.600h4" fill="none" stroke="#7a5a0a" stroke-width="1.200"/></svg>
<div class="t nt" style="left:69.3px;top:127px;transform:scaleX(0.9928)">Volumes</div>
<div class="dotsh" style="left:40px;top:155px;width:7px"></div>
<div class="pm plus" style="left:30px;top:151px"></div>
<svg style="left:47px;top:146px" width="14" height="14" viewBox="0 0 15 15"><rect x="0.500" y="0.500" width="14" height="14" rx="2" fill="url(#gF)" stroke="#c9a42a"/><path d="M9.500 3.300c-2-0.800-2.600 0.600-2.900 2.600l-0.700 4c-0.300 1.500-1 1.800-2 1.400M4.800 6.600h4" fill="none" stroke="#7a5a0a" stroke-width="1.200"/></svg>
<div class="t nt" style="left:69.3px;top:145px;transform:scaleX(0.9891)">Bill Williams</div>
<div class="dotsh" style="left:40px;top:173px;width:7px"></div>
<div class="pm plus" style="left:30px;top:169px"></div>
<svg style="left:47.5px;top:164px" width="16" height="16" viewBox="0 0 17 17"><rect x="0.500" y="0.500" width="14" height="14" rx="2" fill="url(#gF)" stroke="#c9a42a"/><path d="M8.800 3c-2-0.800-2.600 0.600-2.900 2.600l-0.600 3.600c-0.300 1.500-1 1.800-2 1.400M4.200 6h3.600" fill="none" stroke="#7a5a0a" stroke-width="1.200"/><path d="M12 8.300l3.700 3.700-3.700 3.700-3.700-3.700z" fill="#f6df6a" stroke="#b8921a" stroke-width="0.900"/></svg>
<div class="t nt" style="left:69.3px;top:163px;transform:scaleX(0.9673)">AnotherSymRel</div>
<div class="dotsh" style="left:40px;top:191px;width:7px"></div>
<div class="pm" style="left:30px;top:187px"></div>
<svg style="left:47.5px;top:182px" width="16" height="16" viewBox="0 0 17 17"><rect x="0.500" y="0.500" width="14" height="14" rx="2" fill="url(#gF)" stroke="#c9a42a"/><path d="M8.800 3c-2-0.800-2.600 0.600-2.900 2.600l-0.600 3.600c-0.300 1.500-1 1.800-2 1.400M4.200 6h3.600" fill="none" stroke="#7a5a0a" stroke-width="1.200"/><path d="M12 8.300l3.700 3.700-3.700 3.700-3.700-3.700z" fill="#f6df6a" stroke="#b8921a" stroke-width="0.900"/></svg>
<div class="t nt" style="left:69.3px;top:181px;transform:scaleX(1.0789)">ATcl</div>
<div class="dotsh" style="left:56px;top:209px;width:12px"></div>
<svg style="left:68.5px;top:200px" width="16" height="16" viewBox="0 0 17 17"><rect x="0.500" y="0.500" width="14" height="14" rx="2" fill="url(#gF)" stroke="#c9a42a"/><path d="M8.800 3c-2-0.800-2.600 0.600-2.900 2.600l-0.600 3.600c-0.300 1.500-1 1.800-2 1.400M4.200 6h3.600" fill="none" stroke="#7a5a0a" stroke-width="1.200"/><path d="M12 8.300l3.700 3.700-3.700 3.700-3.700-3.700z" fill="#f6df6a" stroke="#b8921a" stroke-width="0.900"/></svg>
<div class="t nt" style="left:90.3px;top:199px;transform:scaleX(0.9261)">CawtExcel</div>
<div class="dotsh" style="left:56px;top:227px;width:12px"></div>
<svg style="left:68.5px;top:218px" width="16" height="16" viewBox="0 0 17 17"><rect x="0.500" y="0.500" width="14" height="14" rx="2" fill="url(#gF)" stroke="#c9a42a"/><path d="M8.800 3c-2-0.800-2.600 0.600-2.900 2.600l-0.600 3.600c-0.300 1.500-1 1.800-2 1.400M4.200 6h3.600" fill="none" stroke="#7a5a0a" stroke-width="1.200"/><path d="M12 8.300l3.700 3.700-3.700 3.700-3.700-3.700z" fill="#f6df6a" stroke="#b8921a" stroke-width="0.900"/></svg>
<div class="t nt" style="left:90.3px;top:217px;transform:scaleX(1.0493)">httpclient</div>
<div class="dotsh" style="left:56px;top:245px;width:12px"></div>
<svg style="left:68.5px;top:236px" width="16" height="16" viewBox="0 0 17 17"><rect x="0.500" y="0.500" width="14" height="14" rx="2" fill="url(#gF)" stroke="#c9a42a"/><path d="M8.800 3c-2-0.800-2.600 0.600-2.900 2.600l-0.600 3.600c-0.300 1.500-1 1.800-2 1.400M4.200 6h3.600" fill="none" stroke="#7a5a0a" stroke-width="1.200"/><path d="M12 8.300l3.700 3.700-3.700 3.700-3.700-3.700z" fill="#f6df6a" stroke="#b8921a" stroke-width="0.900"/></svg>
<div class="t nt" style="left:90.3px;top:235px;transform:scaleX(0.9745)">tcpserv</div>
<div class="dotsh" style="left:56px;top:263px;width:12px"></div>
<svg style="left:68.5px;top:254px" width="16" height="16" viewBox="0 0 17 17"><rect x="0.500" y="0.500" width="14" height="14" rx="2" fill="url(#gF)" stroke="#c9a42a"/><path d="M8.800 3c-2-0.800-2.600 0.600-2.900 2.600l-0.600 3.600c-0.300 1.500-1 1.800-2 1.400M4.200 6h3.600" fill="none" stroke="#7a5a0a" stroke-width="1.200"/><path d="M12 8.300l3.700 3.700-3.700 3.700-3.700-3.700z" fill="#f6df6a" stroke="#b8921a" stroke-width="0.900"/></svg>
<div class="abs" style="left:88px;top:253px;width:96px;height:17px;background:#0078d7;outline:1px dotted #fff;outline-offset:-1px"></div>
<div class="t nt" style="left:90.3px;top:253px;color:#fff;transform:scaleX(0.9651)">WebSockBinance</div>
<div class="dotsh" style="left:40px;top:281px;width:7px"></div>
<div class="pm plus" style="left:30px;top:277px"></div>
<svg style="left:47.5px;top:272px" width="16" height="16" viewBox="0 0 17 17"><rect x="0.500" y="0.500" width="14" height="14" rx="2" fill="url(#gF)" stroke="#c9a42a"/><path d="M8.800 3c-2-0.800-2.600 0.600-2.900 2.600l-0.600 3.600c-0.300 1.500-1 1.800-2 1.400M4.200 6h3.600" fill="none" stroke="#7a5a0a" stroke-width="1.200"/><path d="M12 8.300l3.700 3.700-3.700 3.700-3.700-3.700z" fill="#f6df6a" stroke="#b8921a" stroke-width="0.900"/></svg>
<div class="t nt" style="left:69.3px;top:271px;transform:scaleX(0.9676)">BrightRoad</div>
<div class="dotsh" style="left:40px;top:299px;width:7px"></div>
<div class="pm plus" style="left:30px;top:295px"></div>
<svg style="left:47.5px;top:290px" width="16" height="16" viewBox="0 0 17 17"><rect x="0.500" y="0.500" width="14" height="14" rx="2" fill="url(#gF)" stroke="#c9a42a"/><path d="M8.800 3c-2-0.800-2.600 0.600-2.900 2.600l-0.600 3.600c-0.300 1.500-1 1.800-2 1.400M4.200 6h3.600" fill="none" stroke="#7a5a0a" stroke-width="1.200"/><path d="M12 8.300l3.700 3.700-3.700 3.700-3.700-3.700z" fill="#f6df6a" stroke="#b8921a" stroke-width="0.900"/></svg>
<div class="t nt" style="left:69.3px;top:289px;transform:scaleX(0.9248)">Calc1D</div>
<div class="dotsh" style="left:40px;top:317px;width:7px"></div>
<div class="pm" style="left:30px;top:313px"></div>
<svg style="left:47.5px;top:308px" width="16" height="16" viewBox="0 0 17 17"><rect x="0.500" y="0.500" width="14" height="14" rx="2" fill="url(#gF)" stroke="#c9a42a"/><path d="M8.800 3c-2-0.800-2.600 0.600-2.900 2.600l-0.600 3.600c-0.300 1.500-1 1.800-2 1.400M4.200 6h3.600" fill="none" stroke="#7a5a0a" stroke-width="1.200"/><path d="M12 8.300l3.700 3.700-3.700 3.700-3.700-3.700z" fill="#f6df6a" stroke="#b8921a" stroke-width="0.900"/></svg>
<div class="t nt" style="left:69.5px;top:307px;transform:scaleX(0.9469)">ColoFrac</div>
<div class="dotsh" style="left:56px;top:335px;width:12px"></div>
<svg style="left:68.5px;top:326px" width="16" height="16" viewBox="0 0 17 17"><rect x="0.500" y="0.500" width="14" height="14" rx="2" fill="url(#gF)" stroke="#c9a42a"/><path d="M8.800 3c-2-0.800-2.600 0.600-2.900 2.600l-0.600 3.600c-0.300 1.500-1 1.800-2 1.400M4.200 6h3.600" fill="none" stroke="#7a5a0a" stroke-width="1.200"/><path d="M12 8.300l3.700 3.700-3.700 3.700-3.700-3.700z" fill="#f6df6a" stroke="#b8921a" stroke-width="0.900"/></svg>
<div class="t nt" style="left:90.5px;top:325px;transform:scaleX(0.9407)">ColoFrac</div>
<div class="dotsh" style="left:40px;top:353px;width:7px"></div>
<div class="pm plus" style="left:30px;top:349px"></div>
<svg style="left:47.5px;top:344px" width="16" height="16" viewBox="0 0 17 17"><rect x="0.500" y="0.500" width="14" height="14" rx="2" fill="url(#gF)" stroke="#c9a42a"/><path d="M8.800 3c-2-0.800-2.600 0.600-2.900 2.600l-0.600 3.600c-0.300 1.500-1 1.800-2 1.400M4.200 6h3.600" fill="none" stroke="#7a5a0a" stroke-width="1.200"/><path d="M12 8.300l3.700 3.700-3.700 3.700-3.700-3.700z" fill="#f6df6a" stroke="#b8921a" stroke-width="0.900"/></svg>
<div class="t nt" style="left:69.5px;top:343px;transform:scaleX(0.9792)">effe</div>
<div class="dotsh" style="left:40px;top:371px;width:7px"></div>
<div class="pm plus" style="left:30px;top:367px"></div>
<svg style="left:47.5px;top:362px" width="16" height="16" viewBox="0 0 17 17"><rect x="0.500" y="0.500" width="14" height="14" rx="2" fill="url(#gF)" stroke="#c9a42a"/><path d="M8.800 3c-2-0.800-2.600 0.600-2.900 2.600l-0.600 3.600c-0.300 1.500-1 1.800-2 1.400M4.200 6h3.600" fill="none" stroke="#7a5a0a" stroke-width="1.200"/><path d="M12 8.300l3.700 3.700-3.700 3.700-3.700-3.700z" fill="#f6df6a" stroke="#b8921a" stroke-width="0.900"/></svg>
<div class="t nt" style="left:69.5px;top:361px;transform:scaleX(0.9186)">Examples</div>
<div class="dotsh" style="left:40px;top:389px;width:7px"></div>
<div class="pm plus" style="left:30px;top:385px"></div>
<svg style="left:47.5px;top:380px" width="16" height="16" viewBox="0 0 17 17"><rect x="0.500" y="0.500" width="14" height="14" rx="2" fill="url(#gF)" stroke="#c9a42a"/><path d="M8.800 3c-2-0.800-2.600 0.600-2.900 2.600l-0.600 3.600c-0.300 1.500-1 1.800-2 1.400M4.200 6h3.600" fill="none" stroke="#7a5a0a" stroke-width="1.200"/><path d="M12 8.300l3.700 3.700-3.700 3.700-3.700-3.700z" fill="#f6df6a" stroke="#b8921a" stroke-width="0.900"/></svg>
<div class="t nt" style="left:69.5px;top:379px;transform:scaleX(0.9759)">MyOrders</div>
<div class="dotsh" style="left:40px;top:407px;width:7px"></div>
<div class="pm plus" style="left:30px;top:403px"></div>
<svg style="left:47.5px;top:398px" width="16" height="16" viewBox="0 0 17 17"><rect x="0.500" y="0.500" width="14" height="14" rx="2" fill="url(#gF)" stroke="#c9a42a"/><path d="M8.800 3c-2-0.800-2.600 0.600-2.900 2.600l-0.600 3.600c-0.300 1.500-1 1.800-2 1.400M4.200 6h3.600" fill="none" stroke="#7a5a0a" stroke-width="1.200"/><path d="M12 8.300l3.700 3.700-3.700 3.700-3.700-3.700z" fill="#f6df6a" stroke="#b8921a" stroke-width="0.900"/></svg>
<div class="t nt" style="left:69.5px;top:397px;transform:scaleX(1.0163)">nektomk</div>
<div class="dotsh" style="left:40px;top:425px;width:7px"></div>
<div class="pm plus" style="left:30px;top:421px"></div>
<svg style="left:47.5px;top:416px" width="16" height="16" viewBox="0 0 17 17"><rect x="0.500" y="0.500" width="14" height="14" rx="2" fill="url(#gF)" stroke="#c9a42a"/><path d="M8.800 3c-2-0.800-2.600 0.600-2.900 2.600l-0.600 3.600c-0.300 1.500-1 1.800-2 1.400M4.200 6h3.600" fill="none" stroke="#7a5a0a" stroke-width="1.200"/><path d="M12 8.300l3.700 3.700-3.700 3.700-3.700-3.700z" fill="#f6df6a" stroke="#b8921a" stroke-width="0.900"/></svg>
<div class="t nt" style="left:69.5px;top:415px;transform:scaleX(0.9571)">Prima</div>
<div class="dotsh" style="left:40px;top:443px;width:7px"></div>
<div class="pm" style="left:30px;top:439px"></div>
<svg style="left:47.5px;top:434px" width="16" height="16" viewBox="0 0 17 17"><rect x="0.500" y="0.500" width="14" height="14" rx="2" fill="url(#gF)" stroke="#c9a42a"/><path d="M8.800 3c-2-0.800-2.600 0.600-2.900 2.600l-0.600 3.600c-0.300 1.500-1 1.800-2 1.400M4.200 6h3.600" fill="none" stroke="#7a5a0a" stroke-width="1.200"/><path d="M12 8.300l3.700 3.700-3.700 3.700-3.700-3.700z" fill="#f6df6a" stroke="#b8921a" stroke-width="0.900"/></svg>
<div class="t nt" style="left:69.5px;top:433px;transform:scaleX(0.9662)">QuoteExport</div>
<div class="dotsh" style="left:56px;top:461px;width:12px"></div>
<svg style="left:68.5px;top:452px" width="16" height="16" viewBox="0 0 17 17"><rect x="0.500" y="0.500" width="14" height="14" rx="2" fill="url(#gF)" stroke="#c9a42a"/><path d="M8.800 3c-2-0.800-2.600 0.600-2.900 2.600l-0.600 3.600c-0.300 1.500-1 1.800-2 1.400M4.200 6h3.600" fill="none" stroke="#7a5a0a" stroke-width="1.200"/><path d="M12 8.300l3.700 3.700-3.700 3.700-3.700-3.700z" fill="#f6df6a" stroke="#b8921a" stroke-width="0.900"/></svg>
<div class="t nt" style="left:90.5px;top:451px;transform:scaleX(0.9677)">QuoteExport</div>
<div class="dotsh" style="left:40px;top:479px;width:7px"></div>
<div class="pm plus" style="left:30px;top:475px"></div>
<svg style="left:47.5px;top:470px" width="16" height="16" viewBox="0 0 17 17"><rect x="0.500" y="0.500" width="14" height="14" rx="2" fill="url(#gF)" stroke="#c9a42a"/><path d="M8.800 3c-2-0.800-2.600 0.600-2.900 2.600l-0.600 3.600c-0.300 1.500-1 1.800-2 1.400M4.200 6h3.600" fill="none" stroke="#7a5a0a" stroke-width="1.200"/><path d="M12 8.300l3.700 3.700-3.700 3.700-3.700-3.700z" fill="#f6df6a" stroke="#b8921a" stroke-width="0.900"/></svg>
<div class="t nt" style="left:69.5px;top:469px;transform:scaleX(0.9149)">SpreadSheet</div>
<div class="dotsh" style="left:40px;top:497px;width:7px"></div>
<div class="pm" style="left:30px;top:493px"></div>
<svg style="left:47.5px;top:488px" width="16" height="16" viewBox="0 0 17 17"><rect x="0.500" y="0.500" width="14" height="14" rx="2" fill="url(#gF)" stroke="#c9a42a"/><path d="M8.800 3c-2-0.800-2.600 0.600-2.900 2.600l-0.600 3.600c-0.300 1.500-1 1.800-2 1.400M4.200 6h3.600" fill="none" stroke="#7a5a0a" stroke-width="1.200"/><path d="M12 8.300l3.700 3.700-3.700 3.700-3.700-3.700z" fill="#f6df6a" stroke="#b8921a" stroke-width="0.900"/></svg>
<div class="t nt" style="left:69.5px;top:487px;transform:scaleX(0.9931)">TrendTiger</div>
<div class="dotsh" style="left:56px;top:515px;width:12px"></div>
<svg style="left:68.5px;top:506px" width="16" height="16" viewBox="0 0 17 17"><rect x="0.500" y="0.500" width="14" height="14" rx="2" fill="url(#gF)" stroke="#c9a42a"/><path d="M8.800 3c-2-0.800-2.600 0.600-2.900 2.600l-0.600 3.600c-0.300 1.500-1 1.800-2 1.400M4.200 6h3.600" fill="none" stroke="#7a5a0a" stroke-width="1.200"/><path d="M12 8.300l3.700 3.700-3.700 3.700-3.700-3.700z" fill="#f6df6a" stroke="#b8921a" stroke-width="0.900"/></svg>
<div class="t nt" style="left:90.5px;top:505px;transform:scaleX(0.9812)">Tiger</div>
<div class="dotsh" style="left:40px;top:533px;width:7px"></div>
<div class="pm plus" style="left:30px;top:529px"></div>
<svg style="left:47.5px;top:524px" width="16" height="16" viewBox="0 0 17 17"><rect x="0.500" y="0.500" width="14" height="14" rx="2" fill="url(#gF)" stroke="#c9a42a"/><path d="M8.800 3c-2-0.800-2.600 0.600-2.900 2.600l-0.600 3.600c-0.300 1.500-1 1.800-2 1.400M4.200 6h3.600" fill="none" stroke="#7a5a0a" stroke-width="1.200"/><path d="M12 8.300l3.700 3.700-3.700 3.700-3.700-3.700z" fill="#f6df6a" stroke="#b8921a" stroke-width="0.900"/></svg>
<div class="t nt" style="left:69.5px;top:523px;transform:scaleX(0.9680)">webreq</div>
<div class="dotsh" style="left:35px;top:551px;width:12px"></div>
<svg style="left:47.5px;top:542px" width="16" height="16" viewBox="0 0 17 17"><rect x="0.500" y="0.500" width="14" height="14" rx="2" fill="url(#gF)" stroke="#c9a42a"/><path d="M8.800 3c-2-0.800-2.600 0.600-2.900 2.600l-0.600 3.600c-0.300 1.500-1 1.800-2 1.400M4.200 6h3.600" fill="none" stroke="#7a5a0a" stroke-width="1.200"/><path d="M12 8.300l3.700 3.700-3.700 3.700-3.700-3.700z" fill="#f6df6a" stroke="#b8921a" stroke-width="0.900"/></svg>
<div class="t nt" style="left:69.5px;top:541px;transform:scaleX(0.9785)">Accelerator</div>
<div class="dotsh" style="left:35px;top:569px;width:12px"></div>
<svg style="left:47.5px;top:560px" width="16" height="16" viewBox="0 0 17 17"><rect x="0.500" y="0.500" width="14" height="14" rx="2" fill="url(#gF)" stroke="#c9a42a"/><path d="M8.800 3c-2-0.800-2.600 0.600-2.900 2.600l-0.600 3.600c-0.300 1.500-1 1.800-2 1.400M4.200 6h3.600" fill="none" stroke="#7a5a0a" stroke-width="1.200"/><path d="M12 8.300l3.700 3.700-3.700 3.700-3.700-3.700z" fill="#f6df6a" stroke="#b8921a" stroke-width="0.900"/></svg>
<div class="t nt" style="left:69.5px;top:559px;transform:scaleX(1.0285)">Accumulation</div>
<div class="dotsh" style="left:35px;top:587px;width:12px"></div>
<svg style="left:47.5px;top:578px" width="16" height="16" viewBox="0 0 17 17"><rect x="0.500" y="0.500" width="14" height="14" rx="2" fill="url(#gF)" stroke="#c9a42a"/><path d="M8.800 3c-2-0.800-2.600 0.600-2.900 2.600l-0.600 3.600c-0.300 1.500-1 1.800-2 1.400M4.200 6h3.600" fill="none" stroke="#7a5a0a" stroke-width="1.200"/><path d="M12 8.300l3.700 3.700-3.700 3.700-3.700-3.700z" fill="#f6df6a" stroke="#b8921a" stroke-width="0.900"/></svg>
<div class="t nt" style="left:69.5px;top:577px;transform:scaleX(1.0240)">Alligator</div>
<div class="dotsh" style="left:35px;top:605px;width:12px"></div>
<svg style="left:47.5px;top:596px" width="16" height="16" viewBox="0 0 17 17"><rect x="0.500" y="0.500" width="14" height="14" rx="2" fill="url(#gF)" stroke="#c9a42a"/><path d="M8.800 3c-2-0.800-2.600 0.600-2.900 2.600l-0.600 3.600c-0.300 1.500-1 1.800-2 1.400M4.200 6h3.600" fill="none" stroke="#7a5a0a" stroke-width="1.200"/><path d="M12 8.300l3.700 3.700-3.700 3.700-3.700-3.700z" fill="#f6df6a" stroke="#b8921a" stroke-width="0.900"/></svg>
<div class="t nt" style="left:69.5px;top:595px;transform:scaleX(0.9241)">Awesome</div>
<div class="dotsv" style="left:55px;top:197px;height:64px"></div>
<div class="dotsv" style="left:55px;top:323px;height:10px"></div>
<div class="dotsv" style="left:55px;top:449px;height:10px"></div>
<div class="dotsv" style="left:55px;top:503px;height:10px"></div>
<div class="abs" style="left:294px;top:0px;width:17px;height:602px;background:#f0f0f0"></div>
<div class="abs" style="left:295px;top:18px;width:15px;height:187px;background:#cdcdcd"></div>
<svg style="left:298px;top:6px" width="9" height="6" viewBox="0 0 9 6"><path d="M0.500 5l4-4 4 4" stroke="#505050" stroke-width="1.500" fill="none"/></svg>
<svg style="left:298px;top:590px" width="9" height="6" viewBox="0 0 9 6"><path d="M0.500 1l4 4 4-4" stroke="#505050" stroke-width="1.500" fill="none"/></svg>
</div>
<div class="hl" style="left:76px;top:716px;width:240px;background:#000"></div>
<div class="hl" style="left:4px;top:716px;width:3px;background:#000"></div>
<div class="abs" style="left:6px;top:716px;width:71px;height:20px;background:#fff;border:1px solid #000;border-top:none"></div>
<div class="tab" style="left:16px;top:719px;color:#000;transform:scaleX(1.0434)">Common</div>
<div class="tab" style="left:87.5px;top:719px;transform:scaleX(0.9340)">Favorites</div>
<div class="vl" style="left:144px;top:720px;height:13px;background:#6d6d6d"></div>
<div class="vl" style="left:318px;top:99px;height:643px;background:#8c8c8c"></div>
<!-- DATA WINDOW -->
<div class="phead" style="left:323px;top:100px;width:190px;background:linear-gradient(to right,#c2c8d8,#d8dfec 70%,#eceff5)"></div>
<div class="pht" style="left:325.5px;top:100px;transform:scaleX(0.9691)">Data Window</div>
<div class="abs" style="left:513px;top:100px;width:15px;height:13px;background:#f0f0f0"></div>
<svg style="left:518.7px;top:104px" width="7" height="5" viewBox="0 0 7 5"><path d="M0.600 0.300l5.800 4.400M6.400 0.300l-5.800 4.400" stroke="#000" stroke-width="1.700"/></svg>
<div class="abs" style="left:323px;top:114px;width:205px;height:624px;background:#fff;border:1px solid #a0a0a0;border-top-color:#b8b8b8;border-right:none;border-bottom-color:#d0d0d0"></div>
<div class="abs" style="left:528px;top:98px;width:3px;height:644px;background:#fff"></div>
<div class="abs" style="left:319px;top:98px;width:4px;height:644px;background:#fff"></div>
<div class="abs" style="left:324px;top:115px;width:204px;height:20px;background:#ececec;border-bottom:1px solid #d4d4d4"></div>
<svg style="left:326px;top:117px" width="16" height="15" viewBox="0 0 16 15">
        <rect x="0.500" y="0.500" width="15" height="13" rx="1" fill="#fff" stroke="#2a5fd0"/><rect x="1" y="1" width="14" height="2.500" fill="#2a5fd0"/>
        <path d="M3 11c1.500-6 3-6 4.500-2s3 3 5-3" stroke="#5a4ad0" fill="none" stroke-width="1.100"/></svg>
<div class="dw" style="left:344px;top:118px;transform:scaleX(0.8842)">EURUSD,M1</div>
<div class="abs" style="left:324px;top:135px;width:204px;height:20px;background:#fff;border-bottom:1px solid #d4d4d4"></div>
<div class="vl" style="left:431px;top:135px;height:19px;background:#d4d4d4"></div>
<div class="dw" style="left:344px;top:138px;transform:scaleX(0.9425)">Date</div>
<div class="dw dwr" style="right:1397px;top:138px;transform:scaleX(0.8991)">2018.05.10</div>
<div class="abs" style="left:324px;top:155px;width:204px;height:20px;background:#ececec;border-bottom:1px solid #d4d4d4"></div>
<div class="vl" style="left:431px;top:155px;height:19px;background:#d4d4d4"></div>
<div class="dw" style="left:344px;top:158px;transform:scaleX(1.0292)">Time</div>
<div class="dw dwr" style="right:1397px;top:158px;transform:scaleX(0.8991)">14:11</div>
<div class="abs" style="left:324px;top:175px;width:204px;height:20px;background:#fff;border-bottom:1px solid #d4d4d4"></div>
<div class="vl" style="left:431px;top:175px;height:19px;background:#d4d4d4"></div>
<div class="dw" style="left:344px;top:178px;transform:scaleX(0.9707)">Open</div>
<div class="dw dwr" style="right:1397px;top:178px;transform:scaleX(0.8896)">1.18812</div>
<div class="abs" style="left:324px;top:195px;width:204px;height:20px;background:#ececec;border-bottom:1px solid #d4d4d4"></div>
<div class="vl" style="left:431px;top:195px;height:19px;background:#d4d4d4"></div>
<div class="dw" style="left:344px;top:198px;transform:scaleX(1.0289)">High</div>
<div class="dw dwr" style="right:1397px;top:198px;transform:scaleX(0.8896)">1.18812</div>
<div class="abs" style="left:324px;top:215px;width:204px;height:20px;background:#fff;border-bottom:1px solid #d4d4d4"></div>
<div class="vl" style="left:431px;top:215px;height:19px;background:#d4d4d4"></div>
<div class="dw" style="left:344px;top:218px;transform:scaleX(0.9857)">Low</div>
<div class="dw dwr" style="right:1397px;top:218px;transform:scaleX(0.8896)">1.18787</div>
<div class="abs" style="left:324px;top:235px;width:204px;height:20px;background:#ececec;border-bottom:1px solid #d4d4d4"></div>
<div class="vl" style="left:431px;top:235px;height:19px;background:#d4d4d4"></div>
<div class="dw" style="left:344px;top:238px;transform:scaleX(0.9483)">Close</div>
<div class="dw dwr" style="right:1397px;top:238px;transform:scaleX(0.8896)">1.18807</div>
<div class="abs" style="left:324px;top:255px;width:204px;height:20px;background:#fff;border-bottom:1px solid #d4d4d4"></div>
<div class="vl" style="left:431px;top:255px;height:19px;background:#d4d4d4"></div>
<div class="dw" style="left:344px;top:258px;transform:scaleX(1.0042)">Volume</div>
<div class="dw dwr" style="right:1397px;top:258px;transform:scaleX(0.8533)">75</div>
<div class="abs" style="left:324px;top:275px;width:204px;height:20px;background:#ececec;border-bottom:1px solid #d4d4d4"></div>
<div class="vl" style="left:431px;top:275px;height:19px;background:#d4d4d4"></div>
<svg style="left:327px;top:277px" width="16" height="16" viewBox="0 0 17 17"><rect x="0.500" y="0.500" width="14" height="14" rx="2" fill="url(#gF)" stroke="#c9a42a"/><path d="M8.800 3c-2-0.800-2.600 0.600-2.900 2.600l-0.600 3.600c-0.300 1.500-1 1.800-2 1.400M4.200 6h3.600" fill="none" stroke="#7a5a0a" stroke-width="1.200"/><path d="M12 8.300l3.700 3.700-3.700 3.700-3.700-3.700z" fill="#f6df6a" stroke="#b8921a" stroke-width="0.900"/></svg>
<div class="dw" style="left:344px;top:278px;transform:scaleX(1.0556)">httpclient</div>
<div class="abs" style="left:324px;top:295px;width:204px;height:20px;background:#fff;border-bottom:1px solid #d4d4d4"></div>
<div class="vl" style="left:431px;top:295px;height:19px;background:#d4d4d4"></div>
<svg style="left:327px;top:297px" width="16" height="16" viewBox="0 0 17 17"><rect x="0.500" y="0.500" width="14" height="14" rx="2" fill="url(#gF)" stroke="#c9a42a"/><path d="M8.800 3c-2-0.800-2.600 0.600-2.900 2.600l-0.600 3.600c-0.300 1.500-1 1.800-2 1.400M4.200 6h3.600" fill="none" stroke="#7a5a0a" stroke-width="1.200"/><path d="M12 8.300l3.700 3.700-3.700 3.700-3.700-3.700z" fill="#f6df6a" stroke="#b8921a" stroke-width="0.900"/></svg>
<div class="dw" style="left:344px;top:298px;transform:scaleX(0.9441)">WebSockBina...</div>
<!-- CHART -->
<div class="abs" style="left:533px;top:99px;width:1385px;height:621px;background:#000"></div>
<div class="vl" style="left:531px;top:98px;height:643px;background:#a0a0a0"></div>
<div class="hl" style="left:532px;top:98px;width:1386px;background:#696969"></div>
<div class="vl" style="left:532px;top:99px;height:622px;background:#606060"></div>
<svg style="left:533px;top:99px" width="1385" height="622" viewBox="533 99 1385 622" shape-rendering="crispEdges" text-rendering="geometricPrecision">
<path fill="#56cf58" d="M536 363h1v78h-1zM537 428h2v1h-2zM544 425h1v52h-1zM542 425h2v1h-2zM545 463h2v1h-2zM552 436h1v74h-1zM550 495h2v1h-2zM553 457h2v1h-2zM560 457h1v55h-1zM558 459h2v1h-2zM561 487h2v1h-2zM568 417h1v67h-1zM566 483h2v1h-2zM569 422h2v1h-2zM576 382h1v56h-1zM574 425h2v1h-2zM577 419h2v1h-2zM584 387h1v25h-1zM582 409h2v1h-2zM585 406h2v1h-2zM592 382h1v62h-1zM590 401h2v1h-2zM593 438h2v1h-2zM600 390h1v46h-1zM598 435h2v1h-2zM601 419h2v1h-2zM608 406h1v41h-1zM606 417h2v1h-2zM609 441h2v1h-2zM616 436h1v78h-1zM614 438h2v1h-2zM617 493h2v1h-2zM624 444h1v52h-1zM622 490h2v1h-2zM625 449h2v1h-2zM632 444h1v22h-1zM630 455h2v1h-2zM633 449h2v1h-2zM640 406h1v50h-1zM638 438h2v1h-2zM641 436h2v1h-2zM648 409h1v57h-1zM646 438h2v1h-2zM649 460h2v1h-2zM656 430h1v69h-1zM654 487h2v1h-2zM657 468h2v1h-2zM664 384h1v107h-1zM662 466h2v1h-2zM665 398h2v1h-2zM672 387h1v73h-1zM670 406h2v1h-2zM673 449h2v1h-2zM680 341h1v115h-1zM678 452h2v1h-2zM681 341h2v1h-2zM688 346h1v26h-1zM686 347h2v1h-2zM689 368h2v1h-2zM696 330h1v46h-1zM694 363h2v1h-2zM697 354h2v1h-2zM704 352h1v68h-1zM702 368h2v1h-2zM705 409h2v1h-2zM712 357h1v69h-1zM710 411h2v1h-2zM713 360h2v1h-2zM720 357h1v45h-1zM718 365h2v1h-2zM721 398h2v1h-2zM728 379h1v63h-1zM726 401h2v1h-2zM729 441h2v1h-2zM736 376h1v72h-1zM734 447h2v1h-2zM737 392h2v1h-2zM744 376h1v50h-1zM742 390h2v1h-2zM745 395h2v1h-2zM752 398h1v70h-1zM750 398h2v1h-2zM753 444h2v1h-2zM760 425h1v79h-1zM758 455h2v1h-2zM761 498h2v1h-2zM768 479h1v31h-1zM766 495h2v1h-2zM769 495h2v1h-2zM776 468h1v30h-1zM774 497h2v1h-2zM777 482h2v1h-2zM784 463h1v35h-1zM782 476h2v1h-2zM785 497h2v1h-2zM792 495h1v45h-1zM790 501h2v1h-2zM793 522h2v1h-2zM800 449h1v66h-1zM798 514h2v1h-2zM801 463h2v1h-2zM808 457h1v22h-1zM806 459h2v1h-2zM809 471h2v1h-2zM816 471h1v28h-1zM814 474h2v1h-2zM817 495h2v1h-2zM824 498h1v74h-1zM822 501h2v1h-2zM825 555h2v1h-2zM832 498h1v69h-1zM830 552h2v1h-2zM833 536h2v1h-2zM840 525h1v39h-1zM838 539h2v1h-2zM841 525h2v1h-2zM848 517h1v33h-1zM846 517h2v1h-2zM849 533h2v1h-2zM856 509h1v52h-1zM854 536h2v1h-2zM857 552h2v1h-2zM864 490h1v68h-1zM862 557h2v1h-2zM865 547h2v1h-2zM872 547h1v36h-1zM870 552h2v1h-2zM873 566h2v1h-2zM880 533h1v27h-1zM878 555h2v1h-2zM881 559h2v1h-2zM888 552h1v72h-1zM886 563h2v1h-2zM889 609h2v1h-2zM896 587h1v31h-1zM894 604h2v1h-2zM897 587h2v1h-2zM904 585h1v32h-1zM902 593h2v1h-2zM905 616h2v1h-2zM912 598h1v36h-1zM910 625h2v1h-2zM913 631h2v1h-2zM920 587h1v46h-1zM918 632h2v1h-2zM921 604h2v1h-2zM928 568h1v49h-1zM926 601h2v1h-2zM929 598h2v1h-2zM936 560h1v44h-1zM934 601h2v1h-2zM937 577h2v1h-2zM944 544h1v34h-1zM942 574h2v1h-2zM945 555h2v1h-2zM952 539h1v21h-1zM950 558h2v1h-2zM953 559h2v1h-2zM960 549h1v26h-1zM958 568h2v1h-2zM961 552h2v1h-2zM968 506h1v126h-1zM966 558h2v1h-2zM969 512h2v1h-2zM976 512h1v49h-1zM974 517h2v1h-2zM977 560h2v1h-2zM984 539h1v78h-1zM982 547h2v1h-2zM985 604h2v1h-2zM992 555h1v62h-1zM990 609h2v1h-2zM993 563h2v1h-2zM1000 571h1v42h-1zM998 571h2v1h-2zM1001 587h2v1h-2zM1008 547h1v38h-1zM1006 584h2v1h-2zM1009 549h2v1h-2zM1016 455h1v92h-1zM1014 546h2v1h-2zM1017 468h2v1h-2zM1024 449h1v50h-1zM1022 474h2v1h-2zM1025 482h2v1h-2zM1032 428h1v60h-1zM1030 479h2v1h-2zM1033 438h2v1h-2zM1040 384h1v58h-1zM1038 441h2v1h-2zM1041 390h2v1h-2zM1048 354h1v72h-1zM1046 387h2v1h-2zM1049 379h2v1h-2zM1056 323h1v64h-1zM1054 386h2v1h-2zM1057 349h2v1h-2zM1064 319h1v41h-1zM1062 352h2v1h-2zM1065 327h2v1h-2zM1072 311h1v24h-1zM1070 317h2v1h-2zM1073 317h2v1h-2zM1080 306h1v44h-1zM1078 322h2v1h-2zM1081 325h2v1h-2zM1088 252h1v73h-1zM1086 324h2v1h-2zM1089 256h2v1h-2zM1096 262h1v85h-1zM1094 262h2v1h-2zM1097 330h2v1h-2zM1104 303h1v32h-1zM1102 333h2v1h-2zM1105 306h2v1h-2zM1112 284h1v61h-1zM1110 314h2v1h-2zM1113 302h2v1h-2zM1120 243h1v102h-1zM1118 303h2v1h-2zM1121 252h2v1h-2zM1128 252h1v40h-1zM1126 257h2v1h-2zM1129 276h2v1h-2zM1136 233h1v87h-1zM1134 273h2v1h-2zM1137 252h2v1h-2zM1144 230h1v46h-1zM1142 249h2v1h-2zM1145 241h2v1h-2zM1152 222h1v24h-1zM1150 238h2v1h-2zM1153 230h2v1h-2zM1160 205h1v36h-1zM1158 233h2v1h-2zM1161 227h2v1h-2zM1168 170h1v53h-1zM1166 216h2v1h-2zM1169 192h2v1h-2zM1176 186h1v45h-1zM1174 195h2v1h-2zM1177 227h2v1h-2zM1184 162h1v69h-1zM1182 224h2v1h-2zM1185 176h2v1h-2zM1192 159h1v41h-1zM1190 173h2v1h-2zM1193 199h2v1h-2zM1200 203h1v52h-1zM1198 203h2v1h-2zM1201 216h2v1h-2zM1208 211h1v39h-1zM1206 213h2v1h-2zM1209 246h2v1h-2zM1216 168h1v102h-1zM1214 249h2v1h-2zM1217 205h2v1h-2zM1224 200h1v31h-1zM1222 211h2v1h-2zM1225 222h2v1h-2zM1232 170h1v66h-1zM1230 216h2v1h-2zM1233 181h2v1h-2zM1240 151h1v65h-1zM1238 178h2v1h-2zM1241 200h2v1h-2zM1248 200h1v34h-1zM1246 203h2v1h-2zM1249 216h2v1h-2zM1256 216h1v76h-1zM1254 219h2v1h-2zM1257 289h2v1h-2zM1264 254h1v41h-1zM1262 287h2v1h-2zM1265 273h2v1h-2zM1272 238h1v41h-1zM1270 270h2v1h-2zM1273 257h2v1h-2zM1280 254h1v72h-1zM1278 262h2v1h-2zM1281 325h2v1h-2zM1288 298h1v30h-1zM1286 322h2v1h-2zM1289 300h2v1h-2zM1296 252h1v47h-1zM1294 295h2v1h-2zM1297 254h2v1h-2zM1304 246h1v24h-1zM1302 246h2v1h-2zM1305 252h2v1h-2zM1312 186h1v80h-1zM1310 262h2v1h-2zM1313 186h2v1h-2zM1320 192h1v31h-1zM1318 195h2v1h-2zM1321 197h2v1h-2zM1328 157h1v38h-1zM1326 194h2v1h-2zM1329 181h2v1h-2zM1336 159h1v121h-1zM1334 178h2v1h-2zM1337 235h2v1h-2zM1344 186h1v126h-1zM1342 230h2v1h-2zM1345 270h2v1h-2zM1352 233h1v87h-1zM1350 281h2v1h-2zM1353 243h2v1h-2zM1360 216h1v188h-1zM1358 246h2v1h-2zM1361 401h2v1h-2zM1368 376h1v118h-1zM1366 403h2v1h-2zM1369 490h2v1h-2zM1376 463h1v105h-1zM1374 493h2v1h-2zM1377 484h2v1h-2zM1384 479h1v81h-1zM1382 487h2v1h-2zM1385 549h2v1h-2zM1392 509h1v55h-1zM1390 552h2v1h-2zM1393 512h2v1h-2zM1400 476h1v45h-1zM1398 517h2v1h-2zM1401 506h2v1h-2zM1408 376h1v147h-1zM1406 509h2v1h-2zM1409 398h2v1h-2zM1416 398h1v74h-1zM1414 401h2v1h-2zM1417 398h2v1h-2zM1424 395h1v69h-1zM1422 395h2v1h-2zM1425 409h2v1h-2zM1432 401h1v196h-1zM1430 403h2v1h-2zM1433 490h2v1h-2zM1440 460h1v126h-1zM1438 495h2v1h-2zM1441 585h2v1h-2zM1448 563h1v82h-1zM1446 587h2v1h-2zM1449 587h2v1h-2zM1456 577h1v98h-1zM1454 593h2v1h-2zM1457 593h2v1h-2zM1464 482h1v131h-1zM1462 596h2v1h-2zM1465 484h2v1h-2zM1472 354h1v153h-1zM1470 482h2v1h-2zM1473 379h2v1h-2zM1480 368h1v47h-1zM1478 371h2v1h-2zM1481 376h2v1h-2zM1488 368h1v90h-1zM1486 373h2v1h-2zM1489 414h2v1h-2zM1496 346h1v123h-1zM1494 419h2v1h-2zM1497 365h2v1h-2zM1504 303h1v62h-1zM1502 364h2v1h-2zM1505 306h2v1h-2zM1512 289h1v39h-1zM1510 308h2v1h-2zM1513 289h2v1h-2zM1520 178h1v129h-1zM1518 292h2v1h-2zM1521 203h2v1h-2zM1528 170h1v83h-1zM1526 197h2v1h-2zM1529 222h2v1h-2zM1536 197h1v64h-1zM1534 219h2v1h-2zM1537 252h2v1h-2zM1544 162h1v96h-1zM1542 257h2v1h-2zM1545 168h2v1h-2zM1552 170h1v69h-1zM1550 178h2v1h-2zM1553 235h2v1h-2zM1560 230h1v82h-1zM1558 238h2v1h-2zM1561 281h2v1h-2zM1568 235h1v77h-1zM1566 268h2v1h-2zM1569 311h2v1h-2zM1576 262h1v91h-1zM1574 314h2v1h-2zM1577 265h2v1h-2zM1584 254h1v131h-1zM1582 270h2v1h-2zM1585 279h2v1h-2zM1592 265h1v77h-1zM1590 276h2v1h-2zM1593 322h2v1h-2z"/>
<rect x="536" y="300" width="1340" height="1" fill="#cc3030"/>
<rect x="536" y="322" width="1340" height="1" fill="#b4b4b4"/>
<path fill="#fff" d="M535 101h1341v1h-1341zM535 101h1v599h-1zM1875 101h1v599h-1zM535 699h1341v1h-1341z"/>
<path fill="#9a9a9a" d="M1600 102h10l-5 5z" shape-rendering="auto"/>
<rect x="1876" y="116" width="3" height="1" fill="#fff"/>
<text class="ct ax" x="1882" y="120" textLength="32.5" lengthAdjust="spacingAndGlyphs">1.18915</text>
<rect x="1876" y="157" width="3" height="1" fill="#fff"/>
<text class="ct ax" x="1882" y="161" textLength="32.5" lengthAdjust="spacingAndGlyphs">1.18900</text>
<rect x="1876" y="197" width="3" height="1" fill="#fff"/>
<text class="ct ax" x="1882" y="201" textLength="32.5" lengthAdjust="spacingAndGlyphs">1.18885</text>
<rect x="1876" y="238" width="3" height="1" fill="#fff"/>
<text class="ct ax" x="1882" y="242" textLength="32.5" lengthAdjust="spacingAndGlyphs">1.18870</text>
<rect x="1876" y="279" width="3" height="1" fill="#fff"/>
<text class="ct ax" x="1882" y="283" textLength="32.5" lengthAdjust="spacingAndGlyphs">1.18855</text>
<rect x="1876" y="360" width="3" height="1" fill="#fff"/>
<text class="ct ax" x="1882" y="364" textLength="32.5" lengthAdjust="spacingAndGlyphs">1.18825</text>
<rect x="1876" y="400" width="3" height="1" fill="#fff"/>
<text class="ct ax" x="1882" y="404" textLength="32.5" lengthAdjust="spacingAndGlyphs">1.18810</text>
<rect x="1876" y="441" width="3" height="1" fill="#fff"/>
<text class="ct ax" x="1882" y="445" textLength="32.5" lengthAdjust="spacingAndGlyphs">1.18795</text>
<rect x="1876" y="482" width="3" height="1" fill="#fff"/>
<text class="ct ax" x="1882" y="486" textLength="32.5" lengthAdjust="spacingAndGlyphs">1.18780</text>
<rect x="1876" y="522" width="3" height="1" fill="#fff"/>
<text class="ct ax" x="1882" y="526" textLength="32.5" lengthAdjust="spacingAndGlyphs">1.18765</text>
<rect x="1876" y="563" width="3" height="1" fill="#fff"/>
<text class="ct ax" x="1882" y="567" textLength="32.5" lengthAdjust="spacingAndGlyphs">1.18750</text>
<rect x="1876" y="604" width="3" height="1" fill="#fff"/>
<text class="ct ax" x="1882" y="608" textLength="32.5" lengthAdjust="spacingAndGlyphs">1.18735</text>
<rect x="1876" y="644" width="3" height="1" fill="#fff"/>
<text class="ct ax" x="1882" y="648" textLength="32.5" lengthAdjust="spacingAndGlyphs">1.18720</text>
<rect x="1876" y="685" width="3" height="1" fill="#fff"/>
<text class="ct ax" x="1882" y="689" textLength="32.5" lengthAdjust="spacingAndGlyphs">1.18705</text>
<rect x="1877" y="295" width="41" height="11" fill="#ff1212"/>
<text class="ct ax" x="1882" y="304" textLength="32.5" lengthAdjust="spacingAndGlyphs" style="fill:#7a0000">1.18847</text>
<text class="ct ax" x="1882" y="323" textLength="32.500" lengthAdjust="spacingAndGlyphs">1.18840</text>
<rect x="1877" y="317" width="41" height="11" fill="#fff"/>
<text class="ct ax" x="1882" y="326" textLength="32.500" lengthAdjust="spacingAndGlyphs" style="fill:#000">1.18839</text>
<rect x="536" y="700" width="1" height="3" fill="#fff"/>
<text class="ct ax" x="535.5" y="712" textLength="54.5" lengthAdjust="spacingAndGlyphs">10 May 2018</text>
<rect x="600" y="700" width="1" height="3" fill="#fff"/>
<text class="ct ax" x="599.5" y="712" textLength="57.5" lengthAdjust="spacingAndGlyphs">10 May 12:28</text>
<rect x="664" y="700" width="1" height="3" fill="#fff"/>
<text class="ct ax" x="663.5" y="712" textLength="57.5" lengthAdjust="spacingAndGlyphs">10 May 12:36</text>
<rect x="728" y="700" width="1" height="3" fill="#fff"/>
<text class="ct ax" x="727.5" y="712" textLength="57.5" lengthAdjust="spacingAndGlyphs">10 May 12:44</text>
<rect x="792" y="700" width="1" height="3" fill="#fff"/>
<text class="ct ax" x="791.5" y="712" textLength="57.5" lengthAdjust="spacingAndGlyphs">10 May 12:52</text>
<rect x="856" y="700" width="1" height="3" fill="#fff"/>
<text class="ct ax" x="855.5" y="712" textLength="57.5" lengthAdjust="spacingAndGlyphs">10 May 13:00</text>
<rect x="920" y="700" width="1" height="3" fill="#fff"/>
<text class="ct ax" x="919.5" y="712" textLength="57.5" lengthAdjust="spacingAndGlyphs">10 May 13:08</text>
<rect x="984" y="700" width="1" height="3" fill="#fff"/>
<text class="ct ax" x="983.5" y="712" textLength="57.5" lengthAdjust="spacingAndGlyphs">10 May 13:16</text>
<rect x="1048" y="700" width="1" height="3" fill="#fff"/>
<text class="ct ax" x="1047.5" y="712" textLength="57.5" lengthAdjust="spacingAndGlyphs">10 May 13:24</text>
<rect x="1112" y="700" width="1" height="3" fill="#fff"/>
<text class="ct ax" x="1111.5" y="712" textLength="57.5" lengthAdjust="spacingAndGlyphs">10 May 13:32</text>
<rect x="1176" y="700" width="1" height="3" fill="#fff"/>
<text class="ct ax" x="1175.5" y="712" textLength="57.5" lengthAdjust="spacingAndGlyphs">10 May 13:40</text>
<rect x="1240" y="700" width="1" height="3" fill="#fff"/>
<text class="ct ax" x="1239.5" y="712" textLength="57.5" lengthAdjust="spacingAndGlyphs">10 May 13:48</text>
<rect x="1304" y="700" width="1" height="3" fill="#fff"/>
<text class="ct ax" x="1303.5" y="712" textLength="57.5" lengthAdjust="spacingAndGlyphs">10 May 13:56</text>
<rect x="1368" y="700" width="1" height="3" fill="#fff"/>
<text class="ct ax" x="1367.5" y="712" textLength="57.5" lengthAdjust="spacingAndGlyphs">10 May 14:04</text>
<rect x="1432" y="700" width="1" height="3" fill="#fff"/>
<text class="ct ax" x="1431.5" y="712" textLength="57.5" lengthAdjust="spacingAndGlyphs">10 May 14:12</text>
<rect x="1496" y="700" width="1" height="3" fill="#fff"/>
<text class="ct ax" x="1495.5" y="712" textLength="57.5" lengthAdjust="spacingAndGlyphs">10 May 14:20</text>
<rect x="1560" y="700" width="1" height="3" fill="#fff"/>
<text class="ct ax" x="1559.5" y="712" textLength="57.5" lengthAdjust="spacingAndGlyphs">10 May 14:28</text>
<path fill="#fff" d="M539 107h8l-4 4.500z" shape-rendering="auto"/>
<text class="ct" x="551" y="113" textLength="55" lengthAdjust="spacingAndGlyphs">EURUSD,M1</text>
<text class="ct" x="558.3" y="126" textLength="47.7" lengthAdjust="spacingAndGlyphs" xml:space="preserve">300+  USD</text>
<text class="ct" x="612.8" y="126" style="fill:#b09a7a">|</text>
<text class="ct" x="621.7" y="126" textLength="257.6" lengthAdjust="spacingAndGlyphs" xml:space="preserve">Универсальный сеточник для реализации любых стратегий</text>
<text class="ct" x="561" y="138" textLength="43.0" lengthAdjust="spacingAndGlyphs" xml:space="preserve">30+  USD</text>
<text class="ct" x="611.1" y="138" style="fill:#b09a7a">|</text>
<text class="ct" x="620" y="138" textLength="333.3" lengthAdjust="spacingAndGlyphs" xml:space="preserve">Необходимо доработать существующего советника. (персональная работа)</text>
<text class="ct" x="561" y="150" textLength="43.0" lengthAdjust="spacingAndGlyphs" xml:space="preserve">30+  USD</text>
<text class="ct" x="611.1" y="150" style="fill:#b09a7a">|</text>
<text class="ct" x="620" y="150" textLength="211.0" lengthAdjust="spacingAndGlyphs" xml:space="preserve">Написать фильтр сделок для торгового сигнала</text>
<text class="ct" x="552.3" y="162" textLength="51.7" lengthAdjust="spacingAndGlyphs" xml:space="preserve">30 - 60 USD</text>
<text class="ct" x="611.1" y="162" style="fill:#b09a7a">|</text>
<text class="ct" x="620" y="162" textLength="440.0" lengthAdjust="spacingAndGlyphs" xml:space="preserve">Написание расширения (бота) в хром для открытия ордеров на бинарной платформе OLYMP TRADE</text>
<text class="ct" x="552.3" y="174" textLength="51.7" lengthAdjust="spacingAndGlyphs" xml:space="preserve">30 - 70 USD</text>
<text class="ct" x="611.1" y="174" style="fill:#b09a7a">|</text>
<text class="ct" x="620" y="174" textLength="235.7" lengthAdjust="spacingAndGlyphs" xml:space="preserve">Кастомный индикатор отрисовки локального High/Low</text>
<text class="ct" x="549" y="186" textLength="57.0" lengthAdjust="spacingAndGlyphs" xml:space="preserve">30 - 100 USD</text>
<text class="ct" x="612.8" y="186" style="fill:#b09a7a">|</text>
<text class="ct" x="621.7" y="186" textLength="494.0" lengthAdjust="spacingAndGlyphs" xml:space="preserve">Хотелось бы узнать имеет ли право на жизнь одна простая идея советника по нескольким индикаторам для мт4</text>
<text class="ct" x="561" y="198" textLength="43.0" lengthAdjust="spacingAndGlyphs" xml:space="preserve">30+  USD</text>
<text class="ct" x="611.1" y="198" style="fill:#b09a7a">|</text>
<text class="ct" x="620" y="198" textLength="526.0" lengthAdjust="spacingAndGlyphs" xml:space="preserve">К советнику на основе индикатора Momentum добавить в качестве фильтра индикатор Laguerre (персональная работа)</text>
<text class="ct" x="561" y="210" textLength="43.0" lengthAdjust="spacingAndGlyphs" xml:space="preserve">30+  USD</text>
<text class="ct" x="611.1" y="210" style="fill:#b09a7a">|</text>
<text class="ct" x="620" y="210" textLength="301.7" lengthAdjust="spacingAndGlyphs" xml:space="preserve">Скрипт - советник для открытия сетки ордеров с привязкой к линиям</text>
<text class="ct" x="561" y="222" textLength="43.0" lengthAdjust="spacingAndGlyphs" xml:space="preserve">30+  USD</text>
<text class="ct" x="611.1" y="222" style="fill:#b09a7a">|</text>
<text class="ct" x="620" y="222" textLength="334.0" lengthAdjust="spacingAndGlyphs" xml:space="preserve">Модификация существующего индикатора AWIR-TA (персональная работа)</text>
<text class="ct" x="561" y="234" textLength="43.0" lengthAdjust="spacingAndGlyphs" xml:space="preserve">30+  USD</text>
<text class="ct" x="611.1" y="234" style="fill:#b09a7a">|</text>
<text class="ct" x="620" y="234" textLength="110.0" lengthAdjust="spacingAndGlyphs" xml:space="preserve">Нужен сеточный эксперт</text>
<text class="ct" x="552.3" y="246" textLength="51.7" lengthAdjust="spacingAndGlyphs" xml:space="preserve">30 - 50 USD</text>
<text class="ct" x="611.1" y="246" style="fill:#b09a7a">|</text>
<text class="ct" x="620" y="246" textLength="75.0" lengthAdjust="spacingAndGlyphs" xml:space="preserve">Из MQL4 в MQL5</text>
<text class="ct" x="561" y="258" textLength="43.0" lengthAdjust="spacingAndGlyphs" xml:space="preserve">30+  USD</text>
<text class="ct" x="611.1" y="258" style="fill:#b09a7a">|</text>
<text class="ct" x="620" y="258" textLength="327.7" lengthAdjust="spacingAndGlyphs" xml:space="preserve">Ищу программиста для написания торгового робота на основе индикатора</text>
<text class="ct" x="561" y="270" textLength="43.0" lengthAdjust="spacingAndGlyphs" xml:space="preserve">30+  USD</text>
<text class="ct" x="611.1" y="270" style="fill:#b09a7a">|</text>
<text class="ct" x="620" y="270" textLength="266.7" lengthAdjust="spacingAndGlyphs" xml:space="preserve">Написать эксперта на MQL-4 и MQL-5  Персональная работа</text>
<text class="ct" x="567.3" y="282" textLength="32.7" lengthAdjust="spacingAndGlyphs" xml:space="preserve">30 USD</text>
<text class="ct" x="607.1" y="282" style="fill:#b09a7a">|</text>
<text class="ct" x="616" y="282" textLength="143.3" lengthAdjust="spacingAndGlyphs" xml:space="preserve">Необходим скрипт автоторговли</text>
<text class="ct" x="552.3" y="294" textLength="51.7" lengthAdjust="spacingAndGlyphs" xml:space="preserve">30 - 50 USD</text>
<text class="ct" x="611.1" y="294" style="fill:#b09a7a">|</text>
<text class="ct" x="620" y="294" textLength="236.7" lengthAdjust="spacingAndGlyphs" xml:space="preserve">Необходимо добавить в советника автооптимизацию.</text>
<text class="ct" x="561" y="306" textLength="43.0" lengthAdjust="spacingAndGlyphs" xml:space="preserve">30+  USD</text>
<text class="ct" x="611.1" y="306" style="fill:#b09a7a">|</text>
<text class="ct" x="620" y="306" textLength="175.0" lengthAdjust="spacingAndGlyphs" xml:space="preserve">Нужен советник по индикатору Страйк</text>
<text class="ct" x="552.3" y="318" textLength="51.7" lengthAdjust="spacingAndGlyphs" xml:space="preserve">30 - 70 USD</text>
<text class="ct" x="611.1" y="318" style="fill:#b09a7a">|</text>
<text class="ct" x="620" y="318" textLength="243.3" lengthAdjust="spacingAndGlyphs" xml:space="preserve">Нужен советник с использованием индикатора Bollinger</text>
<text class="ct" x="552.3" y="330" textLength="51.7" lengthAdjust="spacingAndGlyphs" xml:space="preserve">30 - 40 USD</text>
<text class="ct" x="611.1" y="330" style="fill:#b09a7a">|</text>
<text class="ct" x="620" y="330" textLength="285.0" lengthAdjust="spacingAndGlyphs" xml:space="preserve">Доработать популярный сеточник &quot;Forex Setka Trader&quot; (mod 1.6)</text>
<text class="ct" x="561" y="342" textLength="43.0" lengthAdjust="spacingAndGlyphs" xml:space="preserve">72+  USD</text>
<text class="ct" x="611.1" y="342" style="fill:#b09a7a">|</text>
<text class="ct" x="620" y="342" textLength="384.0" lengthAdjust="spacingAndGlyphs" xml:space="preserve">Trendito expert- Эксперт на основе одного индикатора Trend Bars (персональная работа)</text>
<text class="ct" x="552.3" y="354" textLength="51.7" lengthAdjust="spacingAndGlyphs" xml:space="preserve">30 - 40 USD</text>
<text class="ct" x="611.1" y="354" style="fill:#b09a7a">|</text>
<text class="ct" x="620" y="354" textLength="290.7" lengthAdjust="spacingAndGlyphs" xml:space="preserve">Нужен советник совершающий большое количество сделок в день.</text>
</svg>
<div class="abs" style="left:532px;top:720px;width:1388px;height:2px;background:#fff"></div>
<div class="abs" style="left:1918px;top:98px;width:2px;height:622px;background:#fff"></div>
<div class="abs" style="left:533px;top:722px;width:1387px;height:20px;background:#f0f0f0"></div>
<div class="hl" style="left:532px;top:722px;width:1388px;background:#000"></div>
<div class="vl" style="left:532px;top:722px;height:19px;background:#000"></div>
<div class="tab" style="left:548px;top:725px;transform:scaleX(0.8759)" id="ctab1">EURUSD,H1</div>
<div class="abs" style="left:621px;top:722px;width:84px;height:19px;background:#fff;border:1px solid #000;border-top:none"></div>
<div class="tab" style="left:631.25px;top:725px;color:#000;transform:scaleX(0.8842)" id="ctab2">EURUSD,M1</div>
<svg style="left:1887.500px;top:727.500px" width="4" height="7"><path d="M4 0v7l-4-3.500z" fill="#8c8c8c"/></svg>
<svg style="left:1907px;top:727.500px" width="4" height="7"><path d="M0 0v7l4-3.500z" fill="#8c8c8c"/></svg>
<!-- SPLITTER + TERMINAL -->
<div class="hl" style="left:0;top:741px;width:1920px;background:#b4b4b4"></div>
<div class="abs" style="left:0;top:742px;width:1920px;height:4px;background:#fcfcfc"></div>
<div class="abs" style="left:1px;top:758px;width:14px;height:266px;background:linear-gradient(to top,#a4b9d7,#bccce3 50%,#dae3f0)"></div>
<svg style="left:3.800px;top:748.700px" width="6.500" height="5" viewBox="0 0 7 5"><path d="M0.600 0.300l5.800 4.400M6.400 0.300l-5.800 4.400" stroke="#000" stroke-width="1.700"/></svg>
<div class="abs" style="left:2px;top:1021px;width:60px;height:13px;transform:rotate(-90deg);transform-origin:0 0"><div class="t" style="left:0;top:0;font-size:12px;line-height:13px;color:#101830;transform:scaleX(0.9039)">Terminal</div></div>
<div class="abs" style="left:15px;top:746px;width:1902px;height:255px;background:#fff;border-top:1px solid #828790;border-left:1px solid #828790;overflow:hidden">
<div class="t" style="left:6.7px;top:5px;font-size:12px;transform:scaleX(1.0025)">Time</div>
<div class="t" style="left:166.3px;top:5px;font-size:12px;transform:scaleX(0.9445)">Message</div>
<div class="vl" style="left:159px;top:0;height:24px;background:#e4e4e4"></div>
<div class="abs" style="left:0;top:24px;width:1883px;height:20px;background:#ebebeb;border-top:1px solid #d0d0d0"></div>
<div class="vl" style="left:159px;top:24px;height:20px;background:#d8d8d8"></div>
<div class="abs" style="left:6px;top:30px;width:7px;height:7px;border-radius:50%;background:#b4b4b4;border:1px solid #7c7c7c"></div>
<div class="t" style="left:22.5px;top:27px;font-size:12px;transform:scaleX(0.8874)">2018.05.10</div>
<div class="t" style="left:79.7px;top:27px;font-size:12px;transform:scaleX(0.8947)">14:32:34.011</div>
<div class="t" style="left:164.0px;top:27px;font-size:12px;transform:scaleX(0.9598)">WebSockBinance</div>
<div class="t" style="left:258.0px;top:27px;font-size:12px;transform:scaleX(0.8822)">EURUSD,M1:</div>
<div class="t" style="left:327.3px;top:27px;font-size:12px;transform:scaleX(0.8899)">1525951955</div>
<div class="t" style="left:390.7px;top:27px;font-size:12px;transform:scaleX(0.8637)">340</div>
<div class="t" style="left:411.3px;top:27px;font-size:12px;transform:scaleX(0.8942)">0.08125700</div>
<div class="t" style="left:471.3px;top:27px;font-size:12px;transform:scaleX(0.8942)">0.08134800</div>
<div class="abs" style="left:0;top:43px;width:1883px;height:20px;background:#fff;border-top:1px solid #d0d0d0"></div>
<div class="vl" style="left:159px;top:43px;height:20px;background:#d8d8d8"></div>
<div class="abs" style="left:6px;top:50px;width:7px;height:7px;border-radius:50%;background:#b4b4b4;border:1px solid #7c7c7c"></div>
<div class="t" style="left:22.5px;top:47px;font-size:12px;transform:scaleX(0.8874)">2018.05.10</div>
<div class="t" style="left:79.7px;top:47px;font-size:12px;transform:scaleX(0.8833)">14:32:32.769</div>
<div class="t" style="left:164.0px;top:47px;font-size:12px;transform:scaleX(0.9598)">WebSockBinance</div>
<div class="t" style="left:258.0px;top:47px;font-size:12px;transform:scaleX(0.8822)">EURUSD,M1:</div>
<div class="t" style="left:327.3px;top:47px;font-size:12px;transform:scaleX(0.8899)">1525951954</div>
<div class="t" style="left:390.7px;top:47px;font-size:12px;transform:scaleX(0.8637)">214</div>
<div class="t" style="left:411.3px;top:47px;font-size:12px;transform:scaleX(0.8942)">0.08127700</div>
<div class="t" style="left:471.3px;top:47px;font-size:12px;transform:scaleX(0.8942)">0.08135300</div>
<div class="abs" style="left:0;top:63px;width:1883px;height:20px;background:#ebebeb;border-top:1px solid #d0d0d0"></div>
<div class="vl" style="left:159px;top:63px;height:20px;background:#d8d8d8"></div>
<div class="abs" style="left:6px;top:70px;width:7px;height:7px;border-radius:50%;background:#b4b4b4;border:1px solid #7c7c7c"></div>
<div class="t" style="left:22.5px;top:67px;font-size:12px;transform:scaleX(0.8874)">2018.05.10</div>
<div class="t" style="left:79.7px;top:67px;font-size:12px;transform:scaleX(0.8833)">14:32:31.831</div>
<div class="t" style="left:164.0px;top:67px;font-size:12px;transform:scaleX(0.9598)">WebSockBinance</div>
<div class="t" style="left:258.0px;top:67px;font-size:12px;transform:scaleX(0.8822)">EURUSD,M1:</div>
<div class="t" style="left:327.3px;top:67px;font-size:12px;transform:scaleX(0.8899)">1525951953</div>
<div class="t" style="left:390.7px;top:67px;font-size:12px;transform:scaleX(0.8637)">336</div>
<div class="t" style="left:411.3px;top:67px;font-size:12px;transform:scaleX(0.8942)">0.08127600</div>
<div class="t" style="left:471.3px;top:67px;font-size:12px;transform:scaleX(0.8942)">0.08135300</div>
<div class="abs" style="left:0;top:83px;width:1883px;height:20px;background:#fff;border-top:1px solid #d0d0d0"></div>
<div class="vl" style="left:159px;top:83px;height:20px;background:#d8d8d8"></div>
<div class="abs" style="left:6px;top:90px;width:7px;height:7px;border-radius:50%;background:#b4b4b4;border:1px solid #7c7c7c"></div>
<div class="t" style="left:22.5px;top:87px;font-size:12px;transform:scaleX(0.8874)">2018.05.10</div>
<div class="t" style="left:79.7px;top:87px;font-size:12px;transform:scaleX(0.8833)">14:32:31.245</div>
<div class="t" style="left:164.0px;top:87px;font-size:12px;transform:scaleX(0.9598)">WebSockBinance</div>
<div class="t" style="left:258.0px;top:87px;font-size:12px;transform:scaleX(0.8822)">EURUSD,M1:</div>
<div class="t" style="left:327.3px;top:87px;font-size:12px;transform:scaleX(0.8899)">1525951952</div>
<div class="t" style="left:390.7px;top:87px;font-size:12px;transform:scaleX(0.8637)">333</div>
<div class="t" style="left:411.3px;top:87px;font-size:12px;transform:scaleX(0.8942)">0.08126600</div>
<div class="t" style="left:471.3px;top:87px;font-size:12px;transform:scaleX(0.8942)">0.08135300</div>
<div class="abs" style="left:0;top:103px;width:1883px;height:20px;background:#ebebeb;border-top:1px solid #d0d0d0"></div>
<div class="vl" style="left:159px;top:103px;height:20px;background:#d8d8d8"></div>
<div class="abs" style="left:6px;top:110px;width:7px;height:7px;border-radius:50%;background:#b4b4b4;border:1px solid #7c7c7c"></div>
<div class="t" style="left:22.5px;top:107px;font-size:12px;transform:scaleX(0.8874)">2018.05.10</div>
<div class="t" style="left:79.7px;top:107px;font-size:12px;transform:scaleX(0.8833)">14:32:29.906</div>
<div class="t" style="left:164.0px;top:107px;font-size:12px;transform:scaleX(0.9598)">WebSockBinance</div>
<div class="t" style="left:258.0px;top:107px;font-size:12px;transform:scaleX(0.8822)">EURUSD,M1:</div>
<div class="t" style="left:327.3px;top:107px;font-size:12px;transform:scaleX(0.8899)">1525951951</div>
<div class="t" style="left:390.7px;top:107px;font-size:12px;transform:scaleX(0.8637)">342</div>
<div class="t" style="left:411.3px;top:107px;font-size:12px;transform:scaleX(0.8942)">0.08126800</div>
<div class="t" style="left:471.3px;top:107px;font-size:12px;transform:scaleX(0.8942)">0.08135300</div>
<div class="abs" style="left:0;top:123px;width:1883px;height:20px;background:#fff;border-top:1px solid #d0d0d0"></div>
<div class="vl" style="left:159px;top:123px;height:20px;background:#d8d8d8"></div>
<div class="abs" style="left:6px;top:130px;width:7px;height:7px;border-radius:50%;background:#b4b4b4;border:1px solid #7c7c7c"></div>
<div class="t" style="left:22.5px;top:127px;font-size:12px;transform:scaleX(0.8874)">2018.05.10</div>
<div class="t" style="left:79.7px;top:127px;font-size:12px;transform:scaleX(0.8833)">14:32:29.060</div>
<div class="t" style="left:164.0px;top:127px;font-size:12px;transform:scaleX(0.9598)">WebSockBinance</div>
<div class="t" style="left:258.0px;top:127px;font-size:12px;transform:scaleX(0.8822)">EURUSD,M1:</div>
<div class="t" style="left:327.3px;top:127px;font-size:12px;transform:scaleX(0.8899)">1525951950</div>
<div class="t" style="left:390.7px;top:127px;font-size:12px;transform:scaleX(0.8637)">125</div>
<div class="t" style="left:411.3px;top:127px;font-size:12px;transform:scaleX(0.8942)">0.08126800</div>
<div class="t" style="left:471.3px;top:127px;font-size:12px;transform:scaleX(0.8942)">0.08135300</div>
<div class="abs" style="left:0;top:143px;width:1883px;height:20px;background:#ebebeb;border-top:1px solid #d0d0d0"></div>
<div class="vl" style="left:159px;top:143px;height:20px;background:#d8d8d8"></div>
<div class="abs" style="left:6px;top:150px;width:7px;height:7px;border-radius:50%;background:#b4b4b4;border:1px solid #7c7c7c"></div>
<div class="t" style="left:22.5px;top:147px;font-size:12px;transform:scaleX(0.8874)">2018.05.10</div>
<div class="t" style="left:79.7px;top:147px;font-size:12px;transform:scaleX(0.8833)">14:32:27.762</div>
<div class="t" style="left:164.0px;top:147px;font-size:12px;transform:scaleX(0.9598)">WebSockBinance</div>
<div class="t" style="left:258.0px;top:147px;font-size:12px;transform:scaleX(0.8822)">EURUSD,M1:</div>
<div class="t" style="left:327.3px;top:147px;font-size:12px;transform:scaleX(0.8899)">1525951949</div>
<div class="t" style="left:390.7px;top:147px;font-size:12px;transform:scaleX(0.8637)">302</div>
<div class="t" style="left:411.3px;top:147px;font-size:12px;transform:scaleX(0.8942)">0.08126900</div>
<div class="t" style="left:471.3px;top:147px;font-size:12px;transform:scaleX(0.8942)">0.08135300</div>
<div class="abs" style="left:0;top:163px;width:1883px;height:20px;background:#fff;border-top:1px solid #d0d0d0"></div>
<div class="vl" style="left:159px;top:163px;height:20px;background:#d8d8d8"></div>
<div class="abs" style="left:6px;top:170px;width:7px;height:7px;border-radius:50%;background:#b4b4b4;border:1px solid #7c7c7c"></div>
<div class="t" style="left:22.5px;top:167px;font-size:12px;transform:scaleX(0.8874)">2018.05.10</div>
<div class="t" style="left:79.7px;top:167px;font-size:12px;transform:scaleX(0.8833)">14:32:26.839</div>
<div class="t" style="left:164.0px;top:167px;font-size:12px;transform:scaleX(0.9598)">WebSockBinance</div>
<div class="t" style="left:258.0px;top:167px;font-size:12px;transform:scaleX(0.8822)">EURUSD,M1:</div>
<div class="t" style="left:327.3px;top:167px;font-size:12px;transform:scaleX(0.8899)">1525951948</div>
<div class="t" style="left:390.7px;top:167px;font-size:12px;transform:scaleX(0.8637)">289</div>
<div class="t" style="left:411.3px;top:167px;font-size:12px;transform:scaleX(0.8942)">0.08126800</div>
<div class="t" style="left:471.3px;top:167px;font-size:12px;transform:scaleX(0.8942)">0.08135500</div>
<div class="abs" style="left:0;top:183px;width:1883px;height:20px;background:#ebebeb;border-top:1px solid #d0d0d0"></div>
<div class="vl" style="left:159px;top:183px;height:20px;background:#d8d8d8"></div>
<div class="abs" style="left:6px;top:190px;width:7px;height:7px;border-radius:50%;background:#b4b4b4;border:1px solid #7c7c7c"></div>
<div class="t" style="left:22.5px;top:187px;font-size:12px;transform:scaleX(0.8874)">2018.05.10</div>
<div class="t" style="left:79.7px;top:187px;font-size:12px;transform:scaleX(0.8833)">14:32:25.896</div>
<div class="t" style="left:164.0px;top:187px;font-size:12px;transform:scaleX(0.9598)">WebSockBinance</div>
<div class="t" style="left:258.0px;top:187px;font-size:12px;transform:scaleX(0.8822)">EURUSD,M1:</div>
<div class="t" style="left:327.3px;top:187px;font-size:12px;transform:scaleX(0.8899)">1525951947</div>
<div class="t" style="left:390.7px;top:187px;font-size:12px;transform:scaleX(0.8637)">332</div>
<div class="t" style="left:411.3px;top:187px;font-size:12px;transform:scaleX(0.8942)">0.08126800</div>
<div class="t" style="left:471.3px;top:187px;font-size:12px;transform:scaleX(0.8942)">0.08135500</div>
<div class="abs" style="left:0;top:203px;width:1883px;height:20px;background:#fff;border-top:1px solid #d0d0d0"></div>
<div class="vl" style="left:159px;top:203px;height:20px;background:#d8d8d8"></div>
<div class="abs" style="left:6px;top:210px;width:7px;height:7px;border-radius:50%;background:#b4b4b4;border:1px solid #7c7c7c"></div>
<div class="t" style="left:22.5px;top:207px;font-size:12px;transform:scaleX(0.8874)">2018.05.10</div>
<div class="t" style="left:79.7px;top:207px;font-size:12px;transform:scaleX(0.8833)">14:32:24.849</div>
<div class="t" style="left:164.0px;top:207px;font-size:12px;transform:scaleX(0.9598)">WebSockBinance</div>
<div class="t" style="left:258.0px;top:207px;font-size:12px;transform:scaleX(0.8822)">EURUSD,M1:</div>
<div class="t" style="left:327.3px;top:207px;font-size:12px;transform:scaleX(0.8899)">1525951946</div>
<div class="t" style="left:390.7px;top:207px;font-size:12px;transform:scaleX(0.8637)">307</div>
<div class="t" style="left:411.3px;top:207px;font-size:12px;transform:scaleX(0.8942)">0.08127700</div>
<div class="t" style="left:471.3px;top:207px;font-size:12px;transform:scaleX(0.8942)">0.08135500</div>
<div class="abs" style="left:0;top:223px;width:1883px;height:20px;background:#ebebeb;border-top:1px solid #d0d0d0"></div>
<div class="vl" style="left:159px;top:223px;height:20px;background:#d8d8d8"></div>
<div class="abs" style="left:6px;top:230px;width:7px;height:7px;border-radius:50%;background:#b4b4b4;border:1px solid #7c7c7c"></div>
<div class="t" style="left:22.5px;top:227px;font-size:12px;transform:scaleX(0.8874)">2018.05.10</div>
<div class="t" style="left:79.7px;top:227px;font-size:12px;transform:scaleX(0.8833)">14:32:24.016</div>
<div class="t" style="left:164.0px;top:227px;font-size:12px;transform:scaleX(0.9598)">WebSockBinance</div>
<div class="t" style="left:258.0px;top:227px;font-size:12px;transform:scaleX(0.8822)">EURUSD,M1:</div>
<div class="t" style="left:327.3px;top:227px;font-size:12px;transform:scaleX(0.8899)">1525951945</div>
<div class="t" style="left:390.7px;top:227px;font-size:12px;transform:scaleX(0.8637)">241</div>
<div class="t" style="left:411.3px;top:227px;font-size:12px;transform:scaleX(0.8942)">0.08128500</div>
<div class="t" style="left:471.3px;top:227px;font-size:12px;transform:scaleX(0.8942)">0.08135600</div>
<div class="abs" style="left:0;top:243px;width:1883px;height:20px;background:#fff;border-top:1px solid #d0d0d0"></div>
<div class="vl" style="left:159px;top:243px;height:20px;background:#d8d8d8"></div>
<div class="abs" style="left:6px;top:250px;width:7px;height:7px;border-radius:50%;background:#b4b4b4;border:1px solid #7c7c7c"></div>
<div class="t" style="left:22.5px;top:247px;font-size:12px;transform:scaleX(0.8874)">2018.05.10</div>
<div class="t" style="left:79.7px;top:247px;font-size:12px;transform:scaleX(0.8947)">14:32:23.011</div>
<div class="t" style="left:164.0px;top:247px;font-size:12px;transform:scaleX(0.9598)">WebSockBinance</div>
<div class="t" style="left:258.0px;top:247px;font-size:12px;transform:scaleX(0.8822)">EURUSD,M1:</div>
<div class="t" style="left:327.3px;top:247px;font-size:12px;transform:scaleX(0.8899)">1525951944</div>
<div class="t" style="left:390.7px;top:247px;font-size:12px;transform:scaleX(0.8637)">297</div>
<div class="t" style="left:411.3px;top:247px;font-size:12px;transform:scaleX(0.8942)">0.08128500</div>
<div class="t" style="left:471.3px;top:247px;font-size:12px;transform:scaleX(0.8942)">0.08135600</div>
<div class="abs" style="left:1883px;top:0;width:18px;height:254px;background:#f0f0f0"></div>
<div class="abs" style="left:1884px;top:17px;width:15px;height:17px;background:#cdcdcd"></div>
<svg style="left:1887px;top:6px" width="9" height="6" viewBox="0 0 9 6"><path d="M0.500 5l4-4 4 4" stroke="#404040" stroke-width="1.600" fill="none"/></svg>
<svg style="left:1887px;top:243px" width="9" height="6" viewBox="0 0 9 6"><path d="M0.500 1l4 4 4-4" stroke="#404040" stroke-width="1.600" fill="none"/></svg>
</div>
<div class="abs" style="left:16px;top:990px;width:1883px;height:11px;background:#fff;display:none"></div>
<div class="hl" style="left:671px;top:1001px;width:1246px;background:#000"></div>
<div class="hl" style="left:15px;top:1001px;width:601px;background:#000"></div>
<div class="tab bt" style="left:28.3px;top:1004px;transform:scaleX(0.9383)">Trade</div>
<div class="tab bt" style="left:78.3px;top:1004px;transform:scaleX(0.9210)">Exposure</div>
<div class="tab bt" style="left:145.7px;top:1004px;transform:scaleX(1.0115)">Account History</div>
<div class="tab bt" style="left:251.7px;top:1004px;transform:scaleX(0.9195)">News</div>
<div class="tab bt" style="left:312.3px;top:1004px;transform:scaleX(0.9580)">Alerts</div>
<div class="tab bt" style="left:362.7px;top:1004px;transform:scaleX(0.9986)">Mailbox</div>
<div class="tab bt" style="left:436.7px;top:1004px;transform:scaleX(0.9813)">Market</div>
<div class="tab bt" style="left:493.3px;top:1004px;transform:scaleX(0.9146)">Signals</div>
<div class="tab bt" style="left:550.7px;top:1004px;transform:scaleX(0.9145)">Code Base</div>
<div class="vl" style="left:68px;top:1006px;height:13px;background:#6d6d6d"></div>
<div class="vl" style="left:135px;top:1006px;height:13px;background:#6d6d6d"></div>
<div class="vl" style="left:241px;top:1006px;height:13px;background:#6d6d6d"></div>
<div class="vl" style="left:302px;top:1006px;height:13px;background:#6d6d6d"></div>
<div class="vl" style="left:352px;top:1006px;height:13px;background:#6d6d6d"></div>
<div class="vl" style="left:426px;top:1006px;height:13px;background:#6d6d6d"></div>
<div class="vl" style="left:483px;top:1006px;height:13px;background:#6d6d6d"></div>
<div class="vl" style="left:540px;top:1006px;height:13px;background:#6d6d6d"></div>
<div class="t" style="left:282px;top:1010px;font-size:9px;line-height:10px;font-weight:bold;color:#d0283c">60</div>
<div class="t" style="left:406px;top:1010px;font-size:9px;line-height:10px;font-weight:bold;color:#d0283c">29</div>
<div class="abs" style="left:615px;top:1001px;width:57px;height:20px;background:#fff;border:1px solid #000;border-top:none"></div>
<div class="tab bt" style="left:625.7px;top:1004px;color:#000;transform:scaleX(0.8848)">Experts</div>
<div class="tab bt" style="left:681.7px;top:1004px;transform:scaleX(0.9731)">Journal</div>
<div class="vl" style="left:730px;top:1006px;height:13px;background:#6d6d6d"></div>
<div class="hl" style="left:0;top:1026px;width:1920px;background:#b8b8b8"></div>
<div class="hl" style="left:0;top:1027px;width:1920px;background:#fff"></div>
<div class="sb" style="left:2.7px;transform:scaleX(0.9218)">For Help, press F1</div>
<div class="vl" style="left:1226px;top:1031px;height:17px;background:#a8a8a8"></div>
<div class="vl" style="left:1342px;top:1031px;height:17px;background:#a8a8a8"></div>
<div class="vl" style="left:1444px;top:1031px;height:17px;background:#a8a8a8"></div>
<div class="vl" style="left:1516px;top:1031px;height:17px;background:#a8a8a8"></div>
<div class="vl" style="left:1586px;top:1031px;height:17px;background:#a8a8a8"></div>
<div class="vl" style="left:1654px;top:1031px;height:17px;background:#a8a8a8"></div>
<div class="vl" style="left:1724px;top:1031px;height:17px;background:#a8a8a8"></div>
<div class="vl" style="left:1790px;top:1031px;height:17px;background:#a8a8a8"></div>
<div class="sb" style="left:1232.2px;transform:scaleX(0.9860)">Default</div>
<div class="sb" style="left:1348px;transform:scaleX(0.9002)">2018.05.10 14:11</div>
<div class="sb" style="left:1450.5px;transform:scaleX(0.8958)">O: 1.18812</div>
<div class="sb" style="left:1521.3px;transform:scaleX(0.9145)">H: 1.18812</div>
<div class="sb" style="left:1591.8px;transform:scaleX(0.9062)">L: 1.18787</div>
<div class="sb" style="left:1660px;transform:scaleX(0.9026)">C: 1.18807</div>
<div class="sb" style="left:1729.8px;transform:scaleX(0.8848)">V: 75</div>
<div class="sb" style="left:1823.2px;transform:scaleX(0.9621)">854/0 kb</div>
<svg style="left:1796px;top:1034px" width="24" height="12" shape-rendering="crispEdges"><rect x="0" y="4" width="1" height="8" fill="#3a8a3a"/><rect x="2" y="3" width="1" height="9" fill="#3a8a3a"/><rect x="4" y="2" width="1" height="10" fill="#3a8a3a"/><rect x="6" y="1" width="1" height="11" fill="#3a8a3a"/><rect x="8" y="3" width="1" height="9" fill="#3a8a3a"/><rect x="10" y="2" width="1" height="10" fill="#3a8a3a"/><rect x="12" y="1" width="1" height="11" fill="#3a8a3a"/><rect x="14" y="0" width="1" height="12" fill="#2a3f8a"/><rect x="16" y="2" width="1" height="10" fill="#2a3f8a"/><rect x="18" y="1" width="1" height="11" fill="#2a3f8a"/><rect x="20" y="0" width="1" height="12" fill="#2a3f8a"/><rect x="22" y="0" width="1" height="12" fill="#2a3f8a"/></svg>
</body></html>
